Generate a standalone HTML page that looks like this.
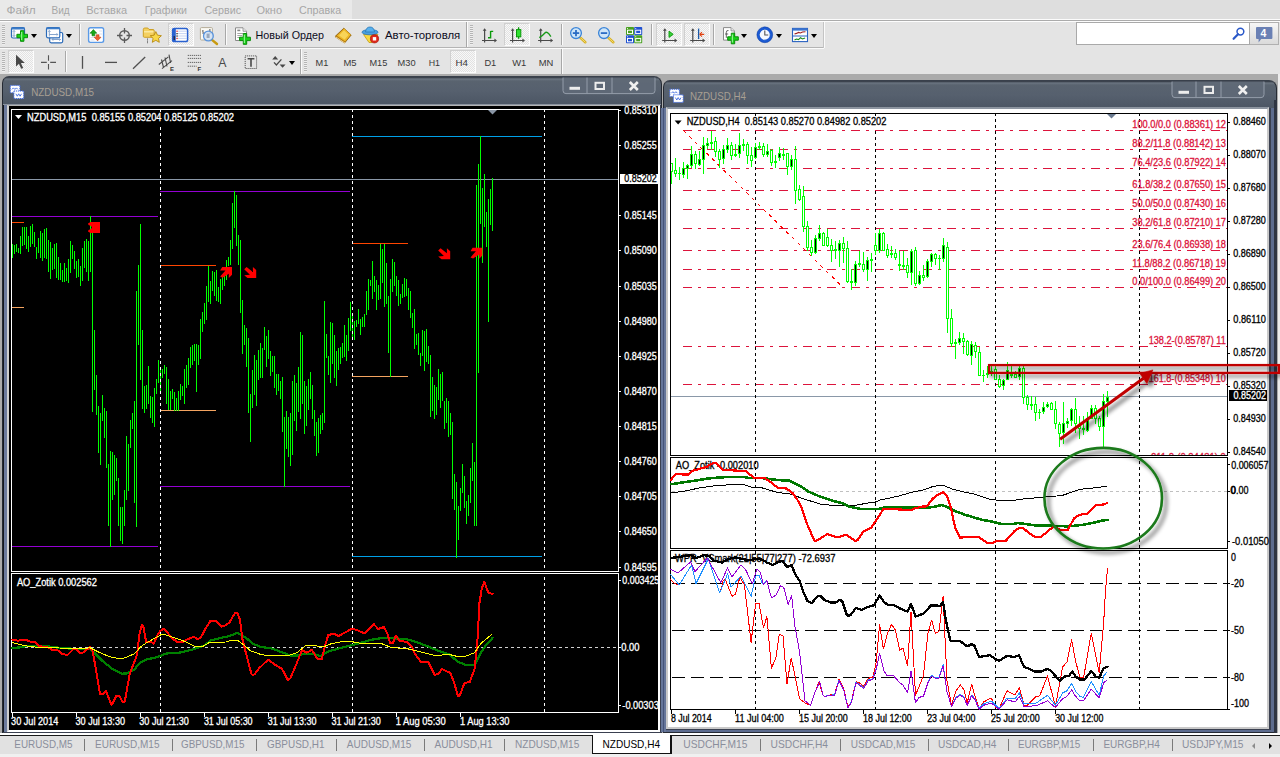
<!DOCTYPE html>
<html><head><meta charset="utf-8"><title>MT4</title>
<style>
*{box-sizing:border-box;margin:0;padding:0}
html,body{width:1280px;height:757px;overflow:hidden;background:#ababab;font-family:"Liberation Sans",sans-serif;font-size:12px;color:#000}
.abs{position:absolute}
#menubar{position:absolute;left:0;top:0;width:1280px;height:20px;background:#e3e3e3}
#menubar .l{position:absolute;left:0;top:0;width:352px;height:20px;background:#f0f0f0}
#menubar span{position:absolute;top:3px;font-size:12.5px;color:#a4a4a4;letter-spacing:-0.1px}
#tb{position:absolute;left:0;top:20px;width:1280px;height:54px;background:#e3e3e3}
.hl{position:absolute;left:0;width:1280px;height:1px}
.sep{position:absolute;width:1px;background:#a8a8a8}
.sep:after{content:"";position:absolute;left:1px;top:0;width:1px;height:100%;background:#fbfbfb}
.grip{position:absolute;width:3px;height:19px;background:repeating-linear-gradient(to bottom,#b4b4b4 0,#b4b4b4 1px,#efefef 1px,#efefef 2px)}
.pressed{position:absolute;border:1px solid #fdfdfd;border-top-color:#d0d0d0;border-left-color:#d0d0d0;background:#efefef;background-image:repeating-conic-gradient(#f8f8f8 0 25%,#e2e2e2 0 50%);background-size:2px 2px}
.tbt{position:absolute;font-size:12px;color:#111;white-space:nowrap}
.tf{position:absolute;top:56px;font-size:10.5px;color:#3a3a3a;white-space:nowrap;letter-spacing:-0.2px}
.dd{position:absolute;width:0;height:0;border-left:3.5px solid transparent;border-right:3.5px solid transparent;border-top:4px solid #000}
.win{position:absolute;background:#545e6c}
.wtitle{position:absolute;font-size:11.5px;color:#a9a092;white-space:nowrap;letter-spacing:-0.1px}
#tabs{position:absolute;left:0;top:736px;width:1280px;height:21px;background:#e1e1e1}
#tabs span{position:absolute;top:2px;font-size:11.5px;color:#8b8f9c;white-space:nowrap;letter-spacing:-0.15px}
#tabs i{position:absolute;top:4px;width:1px;height:12px;background:#7a7a7a}
svg text{font-family:"Liberation Sans",sans-serif}
</style></head><body>
<div id="menubar" style="height:19px;background:#dedede"><div class="l" style="height:19px;background:#e9e9e9"></div></div>
<div id="tb" style="top:19px;height:55px;background:#e4e4e4">
<div class="hl" style="top:0;background:#fcfcfc"></div><div class="hl" style="top:1px;background:#ababab"></div><div class="hl" style="top:2px;background:#fdfdfd"></div>
<div class="hl" style="top:28px;background:#b4b4b4;width:824px"></div><div class="hl" style="top:29px;background:#fbfbfb;width:824px"></div>
<div class="sep" style="left:823px;top:3px;height:26px;background:#c4c4c4"></div>
<div class="sep" style="left:561px;top:30px;height:25px"></div>
</div>
<!-- toolbar 1 items -->
<div class="grip" style="left:2px;top:25px;height:20px"></div>
<div class="sep" style="left:79px;top:24px;height:21px"></div>
<div class="pressed" style="left:168px;top:23px;width:26px;height:23px"></div>
<div class="sep" style="left:225px;top:24px;height:21px"></div>
<div class="sep" style="left:466px;top:22px;height:25px"></div>
<div class="grip" style="left:470px;top:25px;height:20px"></div>
<div class="pressed" style="left:504px;top:23px;width:26px;height:23px"></div>
<div class="sep" style="left:561px;top:24px;height:21px"></div>
<div class="sep" style="left:651px;top:24px;height:21px"></div>
<div class="pressed" style="left:656px;top:23px;width:26px;height:23px"></div>
<div class="pressed" style="left:684px;top:23px;width:26px;height:23px"></div>
<div class="sep" style="left:713px;top:24px;height:21px"></div>
<div class="dd" style="left:30.5px;top:34px"></div><div class="dd" style="left:65.5px;top:34px"></div>
<div class="dd" style="left:740.5px;top:34px"></div><div class="dd" style="left:775.5px;top:34px"></div><div class="dd" style="left:810.5px;top:34px"></div>
<!-- search -->
<div class="abs" style="left:1076px;top:22px;width:174px;height:23px;background:#fff;border:1px solid #a9a9a9"></div>
<div class="abs" style="left:1250px;top:22px;width:29px;height:23px;background:linear-gradient(#f6f6f6,#dadada);border:1px solid #b0b0b0;border-left:none"></div>
<!-- toolbar 2 items -->
<div class="grip" style="left:2px;top:52px;height:20px"></div>
<div class="pressed" style="left:8px;top:50px;width:26px;height:23px"></div>
<div class="sep" style="left:65px;top:51px;height:21px"></div>
<div class="sep" style="left:300px;top:49px;height:25px"></div>
<div class="grip" style="left:304px;top:52px;height:20px"></div>
<div class="pressed" style="left:450px;top:50px;width:26px;height:23px"></div>
<div class="dd" style="left:288.5px;top:61px"></div>
<!-- MDI edges -->
<div class="abs" style="left:1278px;top:74px;width:2px;height:659px;background:#ececec"></div>
<div class="abs" style="left:0;top:733px;width:1280px;height:2px;background:#fff"></div>
<!-- LEFT WINDOW -->
<div class="win" style="left:2px;top:76px;width:660px;height:657px;border-radius:7px 8px 0 0;background:linear-gradient(#2c323c 0,#6a7480 2px,#59636f 4px,#56606e 14px,#4d5765 26px,#4d5765 27px,#8a929e 27px,#8a929e 28px,#4a5462 28px);border:1px solid #252a33;border-top-color:#39404b"></div>
<div class="abs" style="left:3px;top:105px;width:1px;height:627px;background:#15181e"></div>
<div class="abs" style="left:4px;top:105px;width:3px;height:627px;background:#6c7a9c"></div>
<div class="abs" style="left:7px;top:105px;width:653px;height:627px;background:#000;border-left:2px solid #cfcfcf;border-top:1px solid #b4b4b4;border-right:2px solid #fff;border-bottom:2px solid #fff"></div>
<div class="abs" style="left:660px;top:105px;width:1px;height:628px;background:#3a4050"></div>
<div class="abs" style="left:3px;top:732px;width:659px;height:1px;background:#3a4050"></div>
<!-- RIGHT WINDOW -->
<div class="win" style="left:663px;top:80px;width:614px;height:653px;border-radius:7px 8px 0 0;background:linear-gradient(#2c323c 0,#6a7480 2px,#59636f 4px,#56606e 14px,#4d5765 26px,#4a5462 100%);border:1px solid #252a33;border-top-color:#39404b"></div>
<div class="abs" style="left:661px;top:108px;width:5px;height:624px;background:linear-gradient(to right,#66769a 0,#66769a 2px,#46547a 2px,#46547a 3px,#66769a 3px)"></div>
<div class="abs" style="left:1271px;top:108px;width:3px;height:624px;background:#5d6c8e"></div>
<div class="abs" style="left:666px;top:730px;width:608px;height:2px;background:#5d6c8e"></div>
<div class="abs" style="left:666px;top:107px;width:603px;height:622px;background:#fff;border:2px solid #c9c9c9;border-top:2px solid #8d95a0"></div>
<div class="abs" style="left:1269px;top:108px;width:2px;height:622px;background:#3a4050"></div>
<div class="abs" style="left:1274px;top:100px;width:3px;height:633px;background:#2f3542"></div>
<div class="abs" style="left:666px;top:729px;width:605px;height:1px;background:#3a4050"></div>
<!-- bottom tabs -->
<div id="tabs" style="top:735px;height:22px">
<div class="hl" style="top:0;background:#1a1a1a"></div>
<div class="hl" style="top:19px;background:#f0f0f0;height:3px"></div>
<div class="abs" style="left:592px;top:0;width:80px;height:19px;background:#fff;border-left:1px solid #111;border-right:2px solid #111;border-bottom:1px solid #111"></div>
<i style="left:84px"></i><i style="left:172px"></i><i style="left:256px"></i><i style="left:336px"></i><i style="left:424px"></i><i style="left:504px"></i>
<i style="left:760px"></i><i style="left:840px"></i><i style="left:928px"></i><i style="left:1008px"></i><i style="left:1093px"></i><i style="left:1172px"></i>
<div class="abs" style="left:1252px;top:7.5px;width:0;height:0;border-top:3.5px solid transparent;border-bottom:3.5px solid transparent;border-right:3.5px solid #8c8c8c"></div>
<div class="abs" style="left:1269px;top:7.5px;width:0;height:0;border-top:3.5px solid transparent;border-bottom:3.5px solid transparent;border-left:3.5px solid #000"></div>
</div>
<svg class="abs" style="left:0;top:0" width="1280" height="757" viewBox="0 0 1280 757">
<defs><filter id="sh" x="-20%" y="-20%" width="150%" height="160%"><feGaussianBlur in="SourceAlpha" stdDeviation="2.2"/><feOffset dx="3.5" dy="4"/><feComponentTransfer><feFuncA type="linear" slope="0.6"/></feComponentTransfer><feMerge><feMergeNode/><feMergeNode in="SourceGraphic"/></feMerge></filter><filter id="sh2" x="-5%" y="-100%" width="110%" height="400%"><feGaussianBlur in="SourceAlpha" stdDeviation="2"/><feOffset dx="2" dy="2.6"/><feComponentTransfer><feFuncA type="linear" slope="0.62"/></feComponentTransfer><feMerge><feMergeNode/><feMergeNode in="SourceGraphic"/></feMerge></filter></defs>
<g shape-rendering="crispEdges">
<rect x="11" y="109" width="608" height="1" fill="#ffffff" />
<rect x="11" y="571" width="608" height="1" fill="#ffffff" />
<rect x="11" y="109" width="1" height="463" fill="#ffffff"/>
<rect x="618" y="109" width="1" height="463" fill="#ffffff"/>
<rect x="11" y="573" width="608" height="1" fill="#ffffff" />
<rect x="11" y="712" width="608" height="1" fill="#ffffff" />
<rect x="11" y="573" width="1" height="140" fill="#ffffff"/>
<rect x="618" y="573" width="1" height="140" fill="#ffffff"/>
<rect x="12" y="179" width="606" height="1" fill="#8a98a8" />
<rect x="12" y="216" width="146" height="1" fill="#9400d3" />
<rect x="12" y="546" width="146" height="1" fill="#9400d3" />
<rect x="160" y="191" width="190" height="1" fill="#9400d3" />
<rect x="160" y="486" width="190" height="1" fill="#9400d3" />
<rect x="352" y="136" width="190" height="1" fill="#00a0e8" />
<rect x="352" y="556" width="190" height="1" fill="#00a0e8" />
<rect x="12" y="222" width="12" height="1" fill="#ff4500" />
<rect x="12" y="307" width="12" height="1" fill="#f4a460" />
<rect x="160" y="265" width="56" height="1" fill="#ff4500" />
<rect x="160" y="410" width="56" height="1" fill="#f4a460" />
<rect x="352" y="243" width="56" height="1" fill="#ff4500" />
<rect x="352" y="376" width="56" height="1" fill="#f4a460" />
<rect x="12" y="244" width="1" height="14" fill="#00ff00"/>
<rect x="14" y="245" width="1" height="9" fill="#00ff00"/>
<rect x="16" y="244" width="1" height="8" fill="#00ff00"/>
<rect x="18" y="248" width="1" height="5" fill="#00ff00"/>
<rect x="20" y="236" width="1" height="18" fill="#00ff00"/>
<rect x="22" y="227" width="1" height="19" fill="#00ff00"/>
<rect x="24" y="227" width="1" height="18" fill="#00ff00"/>
<rect x="26" y="227" width="1" height="22" fill="#00ff00"/>
<rect x="28" y="236" width="1" height="16" fill="#00ff00"/>
<rect x="30" y="226" width="1" height="21" fill="#00ff00"/>
<rect x="32" y="224" width="1" height="20" fill="#00ff00"/>
<rect x="34" y="232" width="1" height="15" fill="#00ff00"/>
<rect x="36" y="247" width="1" height="12" fill="#00ff00"/>
<rect x="38" y="238" width="1" height="15" fill="#00ff00"/>
<rect x="40" y="231" width="1" height="27" fill="#00ff00"/>
<rect x="42" y="233" width="1" height="28" fill="#00ff00"/>
<rect x="44" y="229" width="1" height="29" fill="#00ff00"/>
<rect x="46" y="228" width="1" height="31" fill="#00ff00"/>
<rect x="48" y="240" width="1" height="32" fill="#00ff00"/>
<rect x="50" y="242" width="1" height="37" fill="#00ff00"/>
<rect x="52" y="248" width="1" height="22" fill="#00ff00"/>
<rect x="54" y="244" width="1" height="25" fill="#00ff00"/>
<rect x="56" y="243" width="1" height="35" fill="#00ff00"/>
<rect x="58" y="257" width="1" height="23" fill="#00ff00"/>
<rect x="60" y="263" width="1" height="17" fill="#00ff00"/>
<rect x="62" y="270" width="1" height="12" fill="#00ff00"/>
<rect x="64" y="263" width="1" height="19" fill="#00ff00"/>
<rect x="66" y="268" width="1" height="13" fill="#00ff00"/>
<rect x="68" y="259" width="1" height="24" fill="#00ff00"/>
<rect x="70" y="241" width="1" height="32" fill="#00ff00"/>
<rect x="72" y="245" width="1" height="14" fill="#00ff00"/>
<rect x="74" y="251" width="1" height="18" fill="#00ff00"/>
<rect x="76" y="261" width="1" height="17" fill="#00ff00"/>
<rect x="78" y="259" width="1" height="18" fill="#00ff00"/>
<rect x="80" y="266" width="1" height="20" fill="#00ff00"/>
<rect x="82" y="248" width="1" height="33" fill="#00ff00"/>
<rect x="84" y="241" width="1" height="27" fill="#00ff00"/>
<rect x="86" y="239" width="1" height="33" fill="#00ff00"/>
<rect x="88" y="241" width="1" height="40" fill="#00ff00"/>
<rect x="90" y="216" width="1" height="56" fill="#00ff00"/>
<rect x="92" y="233" width="1" height="179" fill="#00ff00"/>
<rect x="94" y="330" width="1" height="60" fill="#00ff00"/>
<rect x="96" y="375" width="1" height="40" fill="#00ff00"/>
<rect x="98" y="406" width="1" height="47" fill="#00ff00"/>
<rect x="100" y="413" width="1" height="52" fill="#00ff00"/>
<rect x="102" y="395" width="1" height="26" fill="#00ff00"/>
<rect x="104" y="408" width="1" height="30" fill="#00ff00"/>
<rect x="106" y="411" width="1" height="57" fill="#00ff00"/>
<rect x="108" y="464" width="1" height="62" fill="#00ff00"/>
<rect x="110" y="451" width="1" height="96" fill="#00ff00"/>
<rect x="112" y="452" width="1" height="48" fill="#00ff00"/>
<rect x="114" y="455" width="1" height="40" fill="#00ff00"/>
<rect x="116" y="458" width="1" height="23" fill="#00ff00"/>
<rect x="118" y="478" width="1" height="48" fill="#00ff00"/>
<rect x="120" y="507" width="1" height="34" fill="#00ff00"/>
<rect x="122" y="507" width="1" height="37" fill="#00ff00"/>
<rect x="124" y="490" width="1" height="36" fill="#00ff00"/>
<rect x="126" y="436" width="1" height="64" fill="#00ff00"/>
<rect x="128" y="444" width="1" height="47" fill="#00ff00"/>
<rect x="130" y="420" width="1" height="28" fill="#00ff00"/>
<rect x="132" y="413" width="1" height="16" fill="#00ff00"/>
<rect x="134" y="401" width="1" height="102" fill="#00ff00"/>
<rect x="136" y="291" width="1" height="236" fill="#00ff00"/>
<rect x="138" y="265" width="1" height="80" fill="#00ff00"/>
<rect x="140" y="224" width="1" height="156" fill="#00ff00"/>
<rect x="142" y="330" width="1" height="79" fill="#00ff00"/>
<rect x="144" y="386" width="1" height="27" fill="#00ff00"/>
<rect x="146" y="385" width="1" height="24" fill="#00ff00"/>
<rect x="148" y="366" width="1" height="38" fill="#00ff00"/>
<rect x="150" y="396" width="1" height="22" fill="#00ff00"/>
<rect x="152" y="397" width="1" height="26" fill="#00ff00"/>
<rect x="154" y="388" width="1" height="39" fill="#00ff00"/>
<rect x="156" y="379" width="1" height="15" fill="#00ff00"/>
<rect x="158" y="360" width="1" height="23" fill="#00ff00"/>
<rect x="160" y="367" width="1" height="27" fill="#00ff00"/>
<rect x="162" y="369" width="1" height="9" fill="#00ff00"/>
<rect x="164" y="365" width="1" height="9" fill="#00ff00"/>
<rect x="166" y="367" width="1" height="37" fill="#00ff00"/>
<rect x="168" y="379" width="1" height="31" fill="#00ff00"/>
<rect x="170" y="391" width="1" height="19" fill="#00ff00"/>
<rect x="172" y="389" width="1" height="10" fill="#00ff00"/>
<rect x="174" y="392" width="1" height="19" fill="#00ff00"/>
<rect x="176" y="398" width="1" height="13" fill="#00ff00"/>
<rect x="178" y="391" width="1" height="20" fill="#00ff00"/>
<rect x="180" y="384" width="1" height="16" fill="#00ff00"/>
<rect x="182" y="386" width="1" height="10" fill="#00ff00"/>
<rect x="184" y="369" width="1" height="35" fill="#00ff00"/>
<rect x="186" y="365" width="1" height="23" fill="#00ff00"/>
<rect x="188" y="358" width="1" height="27" fill="#00ff00"/>
<rect x="190" y="347" width="1" height="21" fill="#00ff00"/>
<rect x="192" y="345" width="1" height="20" fill="#00ff00"/>
<rect x="194" y="344" width="1" height="17" fill="#00ff00"/>
<rect x="196" y="344" width="1" height="48" fill="#00ff00"/>
<rect x="198" y="345" width="1" height="20" fill="#00ff00"/>
<rect x="200" y="319" width="1" height="40" fill="#00ff00"/>
<rect x="202" y="312" width="1" height="20" fill="#00ff00"/>
<rect x="204" y="303" width="1" height="21" fill="#00ff00"/>
<rect x="206" y="286" width="1" height="34" fill="#00ff00"/>
<rect x="208" y="266" width="1" height="36" fill="#00ff00"/>
<rect x="210" y="281" width="1" height="23" fill="#00ff00"/>
<rect x="212" y="271" width="1" height="20" fill="#00ff00"/>
<rect x="214" y="272" width="1" height="24" fill="#00ff00"/>
<rect x="216" y="270" width="1" height="31" fill="#00ff00"/>
<rect x="218" y="287" width="1" height="15" fill="#00ff00"/>
<rect x="220" y="279" width="1" height="25" fill="#00ff00"/>
<rect x="222" y="277" width="1" height="13" fill="#00ff00"/>
<rect x="224" y="273" width="1" height="13" fill="#00ff00"/>
<rect x="226" y="260" width="1" height="20" fill="#00ff00"/>
<rect x="228" y="257" width="1" height="9" fill="#00ff00"/>
<rect x="230" y="240" width="1" height="25" fill="#00ff00"/>
<rect x="232" y="203" width="1" height="46" fill="#00ff00"/>
<rect x="234" y="191" width="1" height="37" fill="#00ff00"/>
<rect x="236" y="195" width="1" height="51" fill="#00ff00"/>
<rect x="238" y="235" width="1" height="30" fill="#00ff00"/>
<rect x="240" y="240" width="1" height="73" fill="#00ff00"/>
<rect x="242" y="300" width="1" height="54" fill="#00ff00"/>
<rect x="244" y="325" width="1" height="20" fill="#00ff00"/>
<rect x="246" y="328" width="1" height="39" fill="#00ff00"/>
<rect x="248" y="338" width="1" height="75" fill="#00ff00"/>
<rect x="250" y="394" width="1" height="48" fill="#00ff00"/>
<rect x="252" y="370" width="1" height="38" fill="#00ff00"/>
<rect x="254" y="355" width="1" height="40" fill="#00ff00"/>
<rect x="256" y="360" width="1" height="46" fill="#00ff00"/>
<rect x="258" y="350" width="1" height="30" fill="#00ff00"/>
<rect x="260" y="343" width="1" height="35" fill="#00ff00"/>
<rect x="262" y="348" width="1" height="30" fill="#00ff00"/>
<rect x="264" y="327" width="1" height="23" fill="#00ff00"/>
<rect x="266" y="336" width="1" height="31" fill="#00ff00"/>
<rect x="268" y="330" width="1" height="29" fill="#00ff00"/>
<rect x="270" y="351" width="1" height="25" fill="#00ff00"/>
<rect x="272" y="356" width="1" height="16" fill="#00ff00"/>
<rect x="274" y="356" width="1" height="32" fill="#00ff00"/>
<rect x="276" y="374" width="1" height="21" fill="#00ff00"/>
<rect x="278" y="374" width="1" height="17" fill="#00ff00"/>
<rect x="280" y="381" width="1" height="18" fill="#00ff00"/>
<rect x="282" y="377" width="1" height="55" fill="#00ff00"/>
<rect x="284" y="417" width="1" height="70" fill="#00ff00"/>
<rect x="286" y="411" width="1" height="38" fill="#00ff00"/>
<rect x="288" y="417" width="1" height="40" fill="#00ff00"/>
<rect x="290" y="413" width="1" height="53" fill="#00ff00"/>
<rect x="292" y="381" width="1" height="74" fill="#00ff00"/>
<rect x="294" y="375" width="1" height="46" fill="#00ff00"/>
<rect x="296" y="383" width="1" height="48" fill="#00ff00"/>
<rect x="298" y="367" width="1" height="45" fill="#00ff00"/>
<rect x="300" y="332" width="1" height="87" fill="#00ff00"/>
<rect x="302" y="335" width="1" height="69" fill="#00ff00"/>
<rect x="304" y="381" width="1" height="53" fill="#00ff00"/>
<rect x="306" y="386" width="1" height="40" fill="#00ff00"/>
<rect x="308" y="379" width="1" height="31" fill="#00ff00"/>
<rect x="310" y="372" width="1" height="27" fill="#00ff00"/>
<rect x="312" y="385" width="1" height="34" fill="#00ff00"/>
<rect x="314" y="410" width="1" height="26" fill="#00ff00"/>
<rect x="316" y="422" width="1" height="34" fill="#00ff00"/>
<rect x="318" y="418" width="1" height="35" fill="#00ff00"/>
<rect x="320" y="415" width="1" height="19" fill="#00ff00"/>
<rect x="322" y="413" width="1" height="17" fill="#00ff00"/>
<rect x="324" y="301" width="1" height="122" fill="#00ff00"/>
<rect x="326" y="334" width="1" height="24" fill="#00ff00"/>
<rect x="328" y="356" width="1" height="19" fill="#00ff00"/>
<rect x="330" y="322" width="1" height="61" fill="#00ff00"/>
<rect x="332" y="323" width="1" height="41" fill="#00ff00"/>
<rect x="334" y="335" width="1" height="43" fill="#00ff00"/>
<rect x="336" y="351" width="1" height="35" fill="#00ff00"/>
<rect x="338" y="348" width="1" height="22" fill="#00ff00"/>
<rect x="340" y="347" width="1" height="17" fill="#00ff00"/>
<rect x="342" y="343" width="1" height="15" fill="#00ff00"/>
<rect x="344" y="325" width="1" height="32" fill="#00ff00"/>
<rect x="346" y="335" width="1" height="26" fill="#00ff00"/>
<rect x="348" y="318" width="1" height="33" fill="#00ff00"/>
<rect x="350" y="302" width="1" height="29" fill="#00ff00"/>
<rect x="352" y="316" width="1" height="21" fill="#00ff00"/>
<rect x="354" y="321" width="1" height="19" fill="#00ff00"/>
<rect x="356" y="320" width="1" height="7" fill="#00ff00"/>
<rect x="358" y="309" width="1" height="15" fill="#00ff00"/>
<rect x="360" y="319" width="1" height="16" fill="#00ff00"/>
<rect x="362" y="317" width="1" height="10" fill="#00ff00"/>
<rect x="364" y="314" width="1" height="13" fill="#00ff00"/>
<rect x="366" y="291" width="1" height="24" fill="#00ff00"/>
<rect x="368" y="279" width="1" height="31" fill="#00ff00"/>
<rect x="370" y="280" width="1" height="6" fill="#00ff00"/>
<rect x="372" y="261" width="1" height="38" fill="#00ff00"/>
<rect x="374" y="276" width="1" height="16" fill="#00ff00"/>
<rect x="376" y="280" width="1" height="30" fill="#00ff00"/>
<rect x="378" y="285" width="1" height="15" fill="#00ff00"/>
<rect x="380" y="244" width="1" height="55" fill="#00ff00"/>
<rect x="382" y="249" width="1" height="34" fill="#00ff00"/>
<rect x="384" y="244" width="1" height="63" fill="#00ff00"/>
<rect x="386" y="263" width="1" height="41" fill="#00ff00"/>
<rect x="388" y="296" width="1" height="57" fill="#00ff00"/>
<rect x="390" y="279" width="1" height="98" fill="#00ff00"/>
<rect x="392" y="259" width="1" height="33" fill="#00ff00"/>
<rect x="394" y="262" width="1" height="24" fill="#00ff00"/>
<rect x="396" y="276" width="1" height="20" fill="#00ff00"/>
<rect x="398" y="280" width="1" height="26" fill="#00ff00"/>
<rect x="400" y="294" width="1" height="10" fill="#00ff00"/>
<rect x="402" y="284" width="1" height="14" fill="#00ff00"/>
<rect x="404" y="278" width="1" height="19" fill="#00ff00"/>
<rect x="406" y="279" width="1" height="17" fill="#00ff00"/>
<rect x="408" y="288" width="1" height="22" fill="#00ff00"/>
<rect x="410" y="291" width="1" height="27" fill="#00ff00"/>
<rect x="412" y="313" width="1" height="15" fill="#00ff00"/>
<rect x="414" y="309" width="1" height="40" fill="#00ff00"/>
<rect x="416" y="334" width="1" height="11" fill="#00ff00"/>
<rect x="418" y="333" width="1" height="22" fill="#00ff00"/>
<rect x="420" y="353" width="1" height="13" fill="#00ff00"/>
<rect x="422" y="330" width="1" height="26" fill="#00ff00"/>
<rect x="424" y="331" width="1" height="40" fill="#00ff00"/>
<rect x="426" y="329" width="1" height="33" fill="#00ff00"/>
<rect x="428" y="346" width="1" height="18" fill="#00ff00"/>
<rect x="430" y="355" width="1" height="62" fill="#00ff00"/>
<rect x="432" y="377" width="1" height="34" fill="#00ff00"/>
<rect x="434" y="385" width="1" height="34" fill="#00ff00"/>
<rect x="436" y="387" width="1" height="28" fill="#00ff00"/>
<rect x="438" y="369" width="1" height="31" fill="#00ff00"/>
<rect x="440" y="374" width="1" height="34" fill="#00ff00"/>
<rect x="442" y="372" width="1" height="29" fill="#00ff00"/>
<rect x="444" y="401" width="1" height="28" fill="#00ff00"/>
<rect x="446" y="398" width="1" height="25" fill="#00ff00"/>
<rect x="448" y="401" width="1" height="36" fill="#00ff00"/>
<rect x="450" y="413" width="1" height="22" fill="#00ff00"/>
<rect x="452" y="422" width="1" height="77" fill="#00ff00"/>
<rect x="454" y="474" width="1" height="36" fill="#00ff00"/>
<rect x="456" y="482" width="1" height="76" fill="#00ff00"/>
<rect x="458" y="506" width="1" height="34" fill="#00ff00"/>
<rect x="460" y="488" width="1" height="23" fill="#00ff00"/>
<rect x="462" y="464" width="1" height="29" fill="#00ff00"/>
<rect x="464" y="476" width="1" height="32" fill="#00ff00"/>
<rect x="466" y="501" width="1" height="23" fill="#00ff00"/>
<rect x="468" y="495" width="1" height="21" fill="#00ff00"/>
<rect x="470" y="468" width="1" height="35" fill="#00ff00"/>
<rect x="472" y="443" width="1" height="38" fill="#00ff00"/>
<rect x="474" y="462" width="1" height="64" fill="#00ff00"/>
<rect x="476" y="185" width="1" height="341" fill="#00ff00"/>
<rect x="478" y="164" width="1" height="209" fill="#00ff00"/>
<rect x="480" y="136" width="1" height="88" fill="#00ff00"/>
<rect x="482" y="188" width="1" height="75" fill="#00ff00"/>
<rect x="484" y="174" width="1" height="53" fill="#00ff00"/>
<rect x="486" y="212" width="1" height="35" fill="#00ff00"/>
<rect x="488" y="199" width="1" height="123" fill="#00ff00"/>
<rect x="490" y="189" width="1" height="36" fill="#00ff00"/>
<rect x="492" y="178" width="1" height="53" fill="#00ff00"/>
<line x1="160.5" y1="110" x2="160.5" y2="571" stroke="#ffffff" stroke-width="1" stroke-dasharray="3 3" stroke-dashoffset="1" shape-rendering="crispEdges"/>
<line x1="160.5" y1="574" x2="160.5" y2="712" stroke="#ffffff" stroke-width="1" stroke-dasharray="3 3" stroke-dashoffset="3" shape-rendering="crispEdges"/>
<line x1="352.5" y1="110" x2="352.5" y2="571" stroke="#ffffff" stroke-width="1" stroke-dasharray="3 3" stroke-dashoffset="1" shape-rendering="crispEdges"/>
<line x1="352.5" y1="574" x2="352.5" y2="712" stroke="#ffffff" stroke-width="1" stroke-dasharray="3 3" stroke-dashoffset="3" shape-rendering="crispEdges"/>
<line x1="544.5" y1="110" x2="544.5" y2="571" stroke="#ffffff" stroke-width="1" stroke-dasharray="3 3" stroke-dashoffset="1" shape-rendering="crispEdges"/>
<line x1="544.5" y1="574" x2="544.5" y2="712" stroke="#ffffff" stroke-width="1" stroke-dasharray="3 3" stroke-dashoffset="3" shape-rendering="crispEdges"/>
<line x1="13" y1="647.5" x2="618" y2="647.5" stroke="#d0d0d0" stroke-width="1" stroke-dasharray="3 3" stroke-dashoffset="0" shape-rendering="crispEdges"/>
<rect x="619" y="110" width="2" height="1" fill="#ffffff" />
<rect x="619" y="145" width="2" height="1" fill="#ffffff" />
<rect x="619" y="215" width="2" height="1" fill="#ffffff" />
<rect x="619" y="250" width="2" height="1" fill="#ffffff" />
<rect x="619" y="286" width="2" height="1" fill="#ffffff" />
<rect x="619" y="321" width="2" height="1" fill="#ffffff" />
<rect x="619" y="356" width="2" height="1" fill="#ffffff" />
<rect x="619" y="391" width="2" height="1" fill="#ffffff" />
<rect x="619" y="426" width="2" height="1" fill="#ffffff" />
<rect x="619" y="461" width="2" height="1" fill="#ffffff" />
<rect x="619" y="496" width="2" height="1" fill="#ffffff" />
<rect x="619" y="531" width="2" height="1" fill="#ffffff" />
<rect x="619" y="567" width="2" height="1" fill="#ffffff" />
<rect x="619" y="580" width="2" height="1" fill="#ffffff" />
<rect x="619" y="647" width="2" height="1" fill="#ffffff" />
<rect x="619" y="705" width="2" height="1" fill="#ffffff" />
<rect x="12" y="713" width="1" height="4" fill="#ffffff"/>
<rect x="76" y="713" width="1" height="4" fill="#ffffff"/>
<rect x="140" y="713" width="1" height="4" fill="#ffffff"/>
<rect x="204" y="713" width="1" height="4" fill="#ffffff"/>
<rect x="268" y="713" width="1" height="4" fill="#ffffff"/>
<rect x="332" y="713" width="1" height="4" fill="#ffffff"/>
<rect x="396" y="713" width="1" height="4" fill="#ffffff"/>
<rect x="460" y="713" width="1" height="4" fill="#ffffff"/>
</g>
<text x="624.3" y="113.8" fill="#ffffff" stroke="#ffffff" stroke-width="0.3" font-size="10" text-anchor="start" xml:space="preserve"  textLength="32.5" lengthAdjust="spacingAndGlyphs">0.85310</text>
<text x="624.3" y="148.8" fill="#ffffff" stroke="#ffffff" stroke-width="0.3" font-size="10" text-anchor="start" xml:space="preserve"  textLength="32.5" lengthAdjust="spacingAndGlyphs">0.85255</text>
<text x="624.3" y="218.8" fill="#ffffff" stroke="#ffffff" stroke-width="0.3" font-size="10" text-anchor="start" xml:space="preserve"  textLength="32.5" lengthAdjust="spacingAndGlyphs">0.85145</text>
<text x="624.3" y="253.8" fill="#ffffff" stroke="#ffffff" stroke-width="0.3" font-size="10" text-anchor="start" xml:space="preserve"  textLength="32.5" lengthAdjust="spacingAndGlyphs">0.85090</text>
<text x="624.3" y="289.8" fill="#ffffff" stroke="#ffffff" stroke-width="0.3" font-size="10" text-anchor="start" xml:space="preserve"  textLength="32.5" lengthAdjust="spacingAndGlyphs">0.85035</text>
<text x="624.3" y="324.8" fill="#ffffff" stroke="#ffffff" stroke-width="0.3" font-size="10" text-anchor="start" xml:space="preserve"  textLength="32.5" lengthAdjust="spacingAndGlyphs">0.84980</text>
<text x="624.3" y="359.8" fill="#ffffff" stroke="#ffffff" stroke-width="0.3" font-size="10" text-anchor="start" xml:space="preserve"  textLength="32.5" lengthAdjust="spacingAndGlyphs">0.84925</text>
<text x="624.3" y="394.8" fill="#ffffff" stroke="#ffffff" stroke-width="0.3" font-size="10" text-anchor="start" xml:space="preserve"  textLength="32.5" lengthAdjust="spacingAndGlyphs">0.84870</text>
<text x="624.3" y="429.8" fill="#ffffff" stroke="#ffffff" stroke-width="0.3" font-size="10" text-anchor="start" xml:space="preserve"  textLength="32.5" lengthAdjust="spacingAndGlyphs">0.84815</text>
<text x="624.3" y="464.8" fill="#ffffff" stroke="#ffffff" stroke-width="0.3" font-size="10" text-anchor="start" xml:space="preserve"  textLength="32.5" lengthAdjust="spacingAndGlyphs">0.84760</text>
<text x="624.3" y="499.8" fill="#ffffff" stroke="#ffffff" stroke-width="0.3" font-size="10" text-anchor="start" xml:space="preserve"  textLength="32.5" lengthAdjust="spacingAndGlyphs">0.84705</text>
<text x="624.3" y="534.8" fill="#ffffff" stroke="#ffffff" stroke-width="0.3" font-size="10" text-anchor="start" xml:space="preserve"  textLength="32.5" lengthAdjust="spacingAndGlyphs">0.84650</text>
<text x="624.3" y="570.8" fill="#ffffff" stroke="#ffffff" stroke-width="0.3" font-size="10" text-anchor="start" xml:space="preserve"  textLength="32.5" lengthAdjust="spacingAndGlyphs">0.84595</text>
<rect x="620" y="174" width="38" height="10" fill="#fff"/>
<text x="624.3" y="182" fill="#000" stroke="#000" stroke-width="0.3" font-size="10" text-anchor="start" xml:space="preserve"  textLength="32.5" lengthAdjust="spacingAndGlyphs">0.85202</text>
<text x="622.3" y="584" fill="#ffffff" stroke="#ffffff" stroke-width="0.3" font-size="10" text-anchor="start" xml:space="preserve"  textLength="37" lengthAdjust="spacingAndGlyphs">0.003425</text>
<text x="621.3" y="650.8" fill="#ffffff" stroke="#ffffff" stroke-width="0.3" font-size="10" text-anchor="start" xml:space="preserve"  textLength="18.2" lengthAdjust="spacingAndGlyphs">0.00</text>
<text x="622.3" y="708.8" fill="#ffffff" stroke="#ffffff" stroke-width="0.3" font-size="10" text-anchor="start" xml:space="preserve"  textLength="36.5" lengthAdjust="spacingAndGlyphs">-0.00303</text>
<text x="11.1" y="725.4" fill="#ffffff" stroke="#ffffff" stroke-width="0.3" font-size="10" text-anchor="start" xml:space="preserve"  textLength="47.2" lengthAdjust="spacingAndGlyphs">30 Jul 2014</text>
<text x="75.5" y="725.4" fill="#ffffff" stroke="#ffffff" stroke-width="0.3" font-size="10" text-anchor="start" xml:space="preserve"  textLength="49.5" lengthAdjust="spacingAndGlyphs">30 Jul 13:30</text>
<text x="139.3" y="725.4" fill="#ffffff" stroke="#ffffff" stroke-width="0.3" font-size="10" text-anchor="start" xml:space="preserve"  textLength="49.5" lengthAdjust="spacingAndGlyphs">30 Jul 21:30</text>
<text x="203.9" y="725.4" fill="#ffffff" stroke="#ffffff" stroke-width="0.3" font-size="10" text-anchor="start" xml:space="preserve"  textLength="48.7" lengthAdjust="spacingAndGlyphs">31 Jul 05:30</text>
<text x="267.7" y="725.4" fill="#ffffff" stroke="#ffffff" stroke-width="0.3" font-size="10" text-anchor="start" xml:space="preserve"  textLength="48.7" lengthAdjust="spacingAndGlyphs">31 Jul 13:30</text>
<text x="331.5" y="725.4" fill="#ffffff" stroke="#ffffff" stroke-width="0.3" font-size="10" text-anchor="start" xml:space="preserve"  textLength="49.2" lengthAdjust="spacingAndGlyphs">31 Jul 21:30</text>
<text x="395.7" y="725.4" fill="#ffffff" stroke="#ffffff" stroke-width="0.3" font-size="10" text-anchor="start" xml:space="preserve"  textLength="50.1" lengthAdjust="spacingAndGlyphs">1 Aug 05:30</text>
<text x="460" y="725.4" fill="#ffffff" stroke="#ffffff" stroke-width="0.3" font-size="10" text-anchor="start" xml:space="preserve"  textLength="49.5" lengthAdjust="spacingAndGlyphs">1 Aug 13:30</text>
<rect x="26" y="113" width="209" height="11" fill="#000"/>
<text x="27" y="121" fill="#ffffff" stroke="#ffffff" stroke-width="0.3" font-size="10" text-anchor="start" xml:space="preserve"  textLength="207" lengthAdjust="spacingAndGlyphs">NZDUSD,M15  0.85155 0.85204 0.85125 0.85202</text>
<path d="M15 115h7l-3.5 4z" fill="#fff"/>
<path d="M488 110h9l-4.5 4.5z" fill="#8a96a6"/>
<text x="16.9" y="586" fill="#ffffff" stroke="#ffffff" stroke-width="0.3" font-size="10" text-anchor="start" xml:space="preserve"  textLength="80" lengthAdjust="spacingAndGlyphs">AO_Zotik 0.002562</text>
<polyline points="12.3,647.8 19.9,647.5 26.5,646.0 34.8,646.0 49.6,646.5 59.5,647.8 76.0,649.0 90.0,648.6 95.9,654.4 102.5,661.0 112.4,669.0 121.5,673.7 127.2,673.4 133.8,670.0 140.4,662.6 147.0,659.3 155.3,657.7 160.0,656.0 166.6,653.5 181.5,652.4 193.0,649.4 204.6,645.3 211.2,640.3 219.4,638.2 229.3,636.2 236.7,632.9 240.9,634.6 246.6,638.2 252.4,643.6 260.7,646.9 272.2,648.6 282.1,652.4 290.4,655.5 298.6,655.5 305.2,653.5 313.5,653.9 320.1,656.0 329.2,651.2 342.2,647.5 357.0,643.8 371.8,639.7 382.9,637.9 394.0,638.3 406.9,639.2 416.2,642.0 427.3,646.2 438.4,650.8 449.5,654.5 457.8,661.9 466.1,665.0 474.5,665.0 480.9,652.7 486.5,644.4 492.6,637.9" fill="none" stroke="#008000" stroke-width="2.2" stroke-linejoin="round" stroke-linecap="round" shape-rendering="crispEdges"/>
<polyline points="12.3,639.5 18.3,640.7 24.9,639.5 29.8,641.5 34.8,642.0 38.9,646.0 49.6,647.8 51.3,649.8 57.9,650.3 62.8,654.4 67.8,654.7 73.6,649.0 76.0,649.4 80.2,653.0 83.5,652.4 90.0,647.0 92.6,651.0 95.9,669.0 100.0,694.4 102.5,694.4 105.8,690.7 111.6,705.0 116.5,695.7 119.0,695.7 123.0,702.3 124.8,701.5 129.7,674.0 137.0,655.0 139.6,633.0 142.0,624.7 143.7,628.0 146.2,642.5 150.4,641.5 153.7,643.7 157.8,634.6 160.0,631.3 163.6,628.8 167.4,632.6 171.6,637.9 177.3,642.0 182.3,642.0 187.2,639.5 193.8,636.7 197.1,638.7 200.4,638.4 205.4,628.8 210.3,621.0 216.1,621.0 221.4,626.6 225.2,625.5 229.3,622.7 235.1,612.8 237.6,613.4 240.0,619.7 242.5,639.5 245.8,652.7 251.6,674.5 254.4,674.5 259.0,668.4 268.1,659.6 275.5,665.0 282.1,669.0 287.9,680.0 290.4,678.3 297.0,662.6 301.9,650.2 306.9,652.7 311.8,649.7 317.6,659.3 321.7,659.3 325.0,646.0 328.3,635.0 333.9,633.8 338.5,636.0 345.9,632.0 352.4,628.6 357.9,630.5 364.4,633.3 373.6,624.0 378.3,629.0 383.8,627.0 387.5,634.0 390.3,643.4 393.0,643.0 395.8,635.7 399.5,640.7 406.9,642.0 411.6,646.2 415.3,654.5 420.8,661.6 428.2,661.6 434.7,674.9 438.4,674.0 442.0,669.0 450.4,673.0 454.1,682.3 457.8,695.6 459.7,695.6 464.3,683.2 469.8,681.9 474.5,669.3 477.2,645.3 479.5,602.7 481.9,588.0 484.3,582.0 488.3,592.6 492.6,593.9" fill="none" stroke="#ff0000" stroke-width="2" stroke-linejoin="round" stroke-linecap="round" shape-rendering="crispEdges"/>
<polyline points="12.3,642.5 19.9,644.5 29.8,646.5 43.0,647.8 59.5,648.0 76.0,649.0 90.0,647.8 99.2,652.4 109.0,656.5 120.6,659.0 127.2,656.9 134.7,653.6 140.4,647.0 147.0,642.5 155.3,637.9 161.9,634.3 165.0,634.6 174.9,637.9 184.8,641.5 194.7,646.4 202.9,646.4 209.5,642.5 226.0,642.0 231.0,640.3 237.6,640.3 244.2,645.3 250.8,651.0 260.7,654.4 267.3,655.5 288.7,655.5 297.0,652.7 305.2,646.0 308.5,645.3 316.8,646.0 323.4,646.9 331.1,643.8 342.2,641.6 351.4,641.6 360.7,643.4 381.0,643.4 391.2,647.5 406.9,648.6 423.6,652.7 434.7,655.5 449.5,654.5 458.7,656.8 466.1,656.0 474.5,652.7 480.9,643.4 486.5,638.8 492.0,634.2" fill="none" stroke="#ffff00" stroke-width="1" stroke-linejoin="round" stroke-linecap="round" shape-rendering="crispEdges"/>
<path transform="translate(226 272.5)" d="M-3.8 -5.5L6 -5.5L6 2.2L2.8 5.5L2.8 1.3L-3.3 5.2L-5.9 4.1L-0.5 -2L-5.9 -2Z" fill="#ff0000"/>
<path transform="translate(250.2 272.5)" d="M-3.6 -5.5L2.7 -0.6L2.7 -5.5L6 -2.5L6 5.5L-2.7 5.5L-6 2.7L-0.3 2.2L-6 -3.2Z" fill="#ff0000"/>
<path transform="translate(444.2 253.8)" d="M-3.6 -5.5L2.7 -0.6L2.7 -5.5L6 -2.5L6 5.5L-2.7 5.5L-6 2.7L-0.3 2.2L-6 -3.2Z" fill="#ff0000"/>
<path transform="translate(476.4 253.3)" d="M-3.8 -5.5L6 -5.5L6 2.2L2.8 5.5L2.8 1.3L-3.3 5.2L-5.9 4.1L-0.5 -2L-5.9 -2Z" fill="#ff0000"/>
<path d="M90.5 222H100V233H90.5L88 231.5L88.5 230L91 229L92 227.5L91 226L88.5 225L88 223.5Z" fill="#ff0000"/>
<g shape-rendering="crispEdges">
<rect x="670" y="113" width="558" height="1" fill="#000000" />
<rect x="670" y="455" width="558" height="1" fill="#000000" />
<rect x="670" y="113" width="1" height="343" fill="#000000"/>
<rect x="1227" y="113" width="1" height="343" fill="#000000"/>
<rect x="670" y="457" width="558" height="1" fill="#000000" />
<rect x="670" y="548" width="558" height="1" fill="#000000" />
<rect x="670" y="457" width="1" height="92" fill="#000000"/>
<rect x="1227" y="457" width="1" height="92" fill="#000000"/>
<rect x="670" y="550" width="558" height="1" fill="#000000" />
<rect x="670" y="709" width="558" height="1" fill="#000000" />
<rect x="670" y="550" width="1" height="160" fill="#000000"/>
<rect x="1227" y="550" width="1" height="160" fill="#000000"/>
<line x1="683" y1="130.5" x2="1227" y2="130.5" stroke="#dc143c" stroke-width="1" stroke-dasharray="9 6 3 6" stroke-dashoffset="0" shape-rendering="crispEdges"/>
<line x1="683" y1="149.5" x2="1227" y2="149.5" stroke="#dc143c" stroke-width="1" stroke-dasharray="9 6 3 6" stroke-dashoffset="0" shape-rendering="crispEdges"/>
<line x1="683" y1="168.5" x2="1227" y2="168.5" stroke="#dc143c" stroke-width="1" stroke-dasharray="9 6 3 6" stroke-dashoffset="0" shape-rendering="crispEdges"/>
<line x1="683" y1="190.5" x2="1227" y2="190.5" stroke="#dc143c" stroke-width="1" stroke-dasharray="9 6 3 6" stroke-dashoffset="0" shape-rendering="crispEdges"/>
<line x1="683" y1="209.5" x2="1227" y2="209.5" stroke="#dc143c" stroke-width="1" stroke-dasharray="9 6 3 6" stroke-dashoffset="0" shape-rendering="crispEdges"/>
<line x1="683" y1="228.5" x2="1227" y2="228.5" stroke="#dc143c" stroke-width="1" stroke-dasharray="9 6 3 6" stroke-dashoffset="0" shape-rendering="crispEdges"/>
<line x1="683" y1="250.5" x2="1227" y2="250.5" stroke="#dc143c" stroke-width="1" stroke-dasharray="9 6 3 6" stroke-dashoffset="0" shape-rendering="crispEdges"/>
<line x1="683" y1="269.5" x2="1227" y2="269.5" stroke="#dc143c" stroke-width="1" stroke-dasharray="9 6 3 6" stroke-dashoffset="0" shape-rendering="crispEdges"/>
<line x1="683" y1="287.5" x2="1227" y2="287.5" stroke="#dc143c" stroke-width="1" stroke-dasharray="9 6 3 6" stroke-dashoffset="0" shape-rendering="crispEdges"/>
<line x1="683" y1="346.5" x2="1227" y2="346.5" stroke="#dc143c" stroke-width="1" stroke-dasharray="9 6 3 6" stroke-dashoffset="0" shape-rendering="crispEdges"/>
<line x1="683" y1="384.5" x2="1227" y2="384.5" stroke="#dc143c" stroke-width="1" stroke-dasharray="9 6 3 6" stroke-dashoffset="0" shape-rendering="crispEdges"/>
<rect x="671" y="396" width="556" height="1" fill="#8a98a8" />
<line x1="755.5" y1="114" x2="755.5" y2="455" stroke="#000000" stroke-width="1" stroke-dasharray="3 3" stroke-dashoffset="1" shape-rendering="crispEdges"/>
<line x1="755.5" y1="458" x2="755.5" y2="548" stroke="#000000" stroke-width="1" stroke-dasharray="3 3" stroke-dashoffset="3" shape-rendering="crispEdges"/>
<line x1="755.5" y1="551" x2="755.5" y2="709" stroke="#000000" stroke-width="1" stroke-dasharray="3 3" stroke-dashoffset="0" shape-rendering="crispEdges"/>
<line x1="875.5" y1="114" x2="875.5" y2="455" stroke="#000000" stroke-width="1" stroke-dasharray="3 3" stroke-dashoffset="1" shape-rendering="crispEdges"/>
<line x1="875.5" y1="458" x2="875.5" y2="548" stroke="#000000" stroke-width="1" stroke-dasharray="3 3" stroke-dashoffset="3" shape-rendering="crispEdges"/>
<line x1="875.5" y1="551" x2="875.5" y2="709" stroke="#000000" stroke-width="1" stroke-dasharray="3 3" stroke-dashoffset="0" shape-rendering="crispEdges"/>
<line x1="995.5" y1="114" x2="995.5" y2="455" stroke="#000000" stroke-width="1" stroke-dasharray="3 3" stroke-dashoffset="1" shape-rendering="crispEdges"/>
<line x1="995.5" y1="458" x2="995.5" y2="548" stroke="#000000" stroke-width="1" stroke-dasharray="3 3" stroke-dashoffset="3" shape-rendering="crispEdges"/>
<line x1="995.5" y1="551" x2="995.5" y2="709" stroke="#000000" stroke-width="1" stroke-dasharray="3 3" stroke-dashoffset="0" shape-rendering="crispEdges"/>
<line x1="1139.5" y1="114" x2="1139.5" y2="455" stroke="#000000" stroke-width="1" stroke-dasharray="3 3" stroke-dashoffset="1" shape-rendering="crispEdges"/>
<line x1="1139.5" y1="458" x2="1139.5" y2="548" stroke="#000000" stroke-width="1" stroke-dasharray="3 3" stroke-dashoffset="3" shape-rendering="crispEdges"/>
<line x1="1139.5" y1="551" x2="1139.5" y2="709" stroke="#000000" stroke-width="1" stroke-dasharray="3 3" stroke-dashoffset="0" shape-rendering="crispEdges"/>
<line x1="672" y1="491.5" x2="1227" y2="491.5" stroke="#c0c0c0" stroke-width="1" stroke-dasharray="3 3" stroke-dashoffset="0" shape-rendering="crispEdges"/>
<line x1="672" y1="583.5" x2="1227" y2="583.5" stroke="#000000" stroke-width="1" stroke-dasharray="13 6" stroke-dashoffset="0" shape-rendering="crispEdges"/>
<line x1="672" y1="630.5" x2="1227" y2="630.5" stroke="#000000" stroke-width="1" stroke-dasharray="13 6" stroke-dashoffset="0" shape-rendering="crispEdges"/>
<line x1="672" y1="677.5" x2="1227" y2="677.5" stroke="#000000" stroke-width="1" stroke-dasharray="13 6" stroke-dashoffset="0" shape-rendering="crispEdges"/>
<rect x="1228" y="122" width="2" height="1" fill="#000000" />
<rect x="1228" y="155" width="2" height="1" fill="#000000" />
<rect x="1228" y="188" width="2" height="1" fill="#000000" />
<rect x="1228" y="221" width="2" height="1" fill="#000000" />
<rect x="1228" y="254" width="2" height="1" fill="#000000" />
<rect x="1228" y="287" width="2" height="1" fill="#000000" />
<rect x="1228" y="320" width="2" height="1" fill="#000000" />
<rect x="1228" y="353" width="2" height="1" fill="#000000" />
<rect x="1228" y="386" width="2" height="1" fill="#000000" />
<rect x="1228" y="419" width="2" height="1" fill="#000000" />
<rect x="1228" y="452" width="2" height="1" fill="#000000" />
<rect x="1228" y="464" width="2" height="1" fill="#000000" />
<rect x="1228" y="491" width="2" height="1" fill="#000000" />
<rect x="1228" y="541" width="2" height="1" fill="#000000" />
<rect x="1228" y="583" width="2" height="1" fill="#000000" />
<rect x="1228" y="630" width="2" height="1" fill="#000000" />
<rect x="1228" y="677" width="2" height="1" fill="#000000" />
<rect x="1228" y="709" width="2" height="1" fill="#000000" />
<rect x="671" y="710" width="1" height="4" fill="#000000"/>
<rect x="735" y="710" width="1" height="4" fill="#000000"/>
<rect x="799" y="710" width="1" height="4" fill="#000000"/>
<rect x="863" y="710" width="1" height="4" fill="#000000"/>
<rect x="927" y="710" width="1" height="4" fill="#000000"/>
<rect x="991" y="710" width="1" height="4" fill="#000000"/>
<rect x="1055" y="710" width="1" height="4" fill="#000000"/>
</g>
<line x1="683.5" y1="130.5" x2="843" y2="287.5" stroke="#ff0000" stroke-width="1" stroke-dasharray="3.5 4.5" shape-rendering="crispEdges"/>
<clipPath id="cpc"><rect x="671" y="114" width="556" height="341"/></clipPath>
<g shape-rendering="crispEdges" clip-path="url(#cpc)">
<rect x="671" y="163" width="1" height="21" fill="#00ff00"/>
<rect x="670.5" y="163.5" width="2" height="8" fill="#fff" stroke="#00ff00" stroke-width="1"/>
<rect x="675" y="158" width="1" height="19" fill="#00ff00"/>
<rect x="674.5" y="170.5" width="2" height="3" fill="#fff" stroke="#00ff00" stroke-width="1"/>
<rect x="679" y="167" width="1" height="13" fill="#00ff00"/>
<rect x="678" y="173" width="3" height="1" fill="#00ff00" />
<rect x="683" y="162" width="1" height="16" fill="#00ff00"/>
<rect x="682.5" y="168.5" width="2" height="6" fill="#000" stroke="#00ff00" stroke-width="1"/>
<rect x="687" y="164" width="1" height="15" fill="#00ff00"/>
<rect x="686.5" y="165.5" width="2" height="3" fill="#000" stroke="#00ff00" stroke-width="1"/>
<rect x="691" y="146" width="1" height="22" fill="#00ff00"/>
<rect x="690.5" y="154.5" width="2" height="11" fill="#000" stroke="#00ff00" stroke-width="1"/>
<rect x="695" y="151" width="1" height="18" fill="#00ff00"/>
<rect x="694.5" y="154.5" width="2" height="9" fill="#fff" stroke="#00ff00" stroke-width="1"/>
<rect x="699" y="151" width="1" height="15" fill="#00ff00"/>
<rect x="698.5" y="159.5" width="2" height="5" fill="#000" stroke="#00ff00" stroke-width="1"/>
<rect x="703" y="137" width="1" height="37" fill="#00ff00"/>
<rect x="702.5" y="145.5" width="2" height="14" fill="#000" stroke="#00ff00" stroke-width="1"/>
<rect x="707" y="138" width="1" height="11" fill="#00ff00"/>
<rect x="706.5" y="143.5" width="2" height="2" fill="#000" stroke="#00ff00" stroke-width="1"/>
<rect x="711" y="131" width="1" height="19" fill="#00ff00"/>
<rect x="710" y="142" width="3" height="2" fill="#00ff00" />
<rect x="715" y="137" width="1" height="20" fill="#00ff00"/>
<rect x="714.5" y="141.5" width="2" height="10" fill="#fff" stroke="#00ff00" stroke-width="1"/>
<rect x="719" y="149" width="1" height="19" fill="#00ff00"/>
<rect x="718.5" y="151.5" width="2" height="8" fill="#fff" stroke="#00ff00" stroke-width="1"/>
<rect x="723" y="145" width="1" height="19" fill="#00ff00"/>
<rect x="722.5" y="149.5" width="2" height="9" fill="#000" stroke="#00ff00" stroke-width="1"/>
<rect x="727" y="138" width="1" height="15" fill="#00ff00"/>
<rect x="726.5" y="145.5" width="2" height="4" fill="#000" stroke="#00ff00" stroke-width="1"/>
<rect x="731" y="142" width="1" height="18" fill="#00ff00"/>
<rect x="730.5" y="145.5" width="2" height="10" fill="#fff" stroke="#00ff00" stroke-width="1"/>
<rect x="735" y="144" width="1" height="13" fill="#00ff00"/>
<rect x="734" y="154" width="3" height="2" fill="#00ff00" />
<rect x="739" y="133" width="1" height="25" fill="#00ff00"/>
<rect x="738.5" y="145.5" width="2" height="8" fill="#000" stroke="#00ff00" stroke-width="1"/>
<rect x="743" y="139" width="1" height="12" fill="#00ff00"/>
<rect x="742" y="144" width="3" height="2" fill="#00ff00" />
<rect x="747" y="142" width="1" height="22" fill="#00ff00"/>
<rect x="746.5" y="144.5" width="2" height="11" fill="#fff" stroke="#00ff00" stroke-width="1"/>
<rect x="751" y="147" width="1" height="20" fill="#00ff00"/>
<rect x="750.5" y="155.5" width="2" height="5" fill="#fff" stroke="#00ff00" stroke-width="1"/>
<rect x="755" y="143" width="1" height="16" fill="#00ff00"/>
<rect x="754.5" y="147.5" width="2" height="10" fill="#000" stroke="#00ff00" stroke-width="1"/>
<rect x="759" y="142" width="1" height="8" fill="#00ff00"/>
<rect x="758" y="146" width="3" height="2" fill="#00ff00" />
<rect x="763" y="143" width="1" height="14" fill="#00ff00"/>
<rect x="762.5" y="146.5" width="2" height="8" fill="#fff" stroke="#00ff00" stroke-width="1"/>
<rect x="767" y="144" width="1" height="13" fill="#00ff00"/>
<rect x="766.5" y="151.5" width="2" height="3" fill="#000" stroke="#00ff00" stroke-width="1"/>
<rect x="771" y="149" width="1" height="17" fill="#00ff00"/>
<rect x="770.5" y="150.5" width="2" height="12" fill="#fff" stroke="#00ff00" stroke-width="1"/>
<rect x="775" y="155" width="1" height="13" fill="#00ff00"/>
<rect x="774" y="161" width="3" height="2" fill="#00ff00" />
<rect x="779" y="147" width="1" height="14" fill="#00ff00"/>
<rect x="778.5" y="153.5" width="2" height="4" fill="#000" stroke="#00ff00" stroke-width="1"/>
<rect x="783" y="148" width="1" height="12" fill="#00ff00"/>
<rect x="782" y="154" width="3" height="2" fill="#00ff00" />
<rect x="787" y="153" width="1" height="22" fill="#00ff00"/>
<rect x="786.5" y="153.5" width="2" height="13" fill="#fff" stroke="#00ff00" stroke-width="1"/>
<rect x="791" y="155" width="1" height="15" fill="#00ff00"/>
<rect x="790.5" y="159.5" width="2" height="7" fill="#000" stroke="#00ff00" stroke-width="1"/>
<rect x="795" y="146" width="1" height="58" fill="#00ff00"/>
<rect x="794.5" y="159.5" width="2" height="31" fill="#fff" stroke="#00ff00" stroke-width="1"/>
<rect x="799" y="185" width="1" height="16" fill="#00ff00"/>
<rect x="798.5" y="189.5" width="2" height="10" fill="#fff" stroke="#00ff00" stroke-width="1"/>
<rect x="803" y="186" width="1" height="46" fill="#00ff00"/>
<rect x="802.5" y="196.5" width="2" height="30" fill="#fff" stroke="#00ff00" stroke-width="1"/>
<rect x="807" y="221" width="1" height="30" fill="#00ff00"/>
<rect x="806.5" y="226.5" width="2" height="21" fill="#fff" stroke="#00ff00" stroke-width="1"/>
<rect x="811" y="240" width="1" height="16" fill="#00ff00"/>
<rect x="810.5" y="247.5" width="2" height="5" fill="#fff" stroke="#00ff00" stroke-width="1"/>
<rect x="815" y="235" width="1" height="19" fill="#00ff00"/>
<rect x="814.5" y="238.5" width="2" height="14" fill="#000" stroke="#00ff00" stroke-width="1"/>
<rect x="819" y="225" width="1" height="16" fill="#00ff00"/>
<rect x="818.5" y="233.5" width="2" height="5" fill="#000" stroke="#00ff00" stroke-width="1"/>
<rect x="823" y="232" width="1" height="14" fill="#00ff00"/>
<rect x="822.5" y="233.5" width="2" height="12" fill="#fff" stroke="#00ff00" stroke-width="1"/>
<rect x="827" y="229" width="1" height="18" fill="#00ff00"/>
<rect x="826.5" y="237.5" width="2" height="8" fill="#fff" stroke="#00ff00" stroke-width="1"/>
<rect x="831" y="239" width="1" height="23" fill="#00ff00"/>
<rect x="830.5" y="245.5" width="2" height="5" fill="#fff" stroke="#00ff00" stroke-width="1"/>
<rect x="835" y="241" width="1" height="18" fill="#00ff00"/>
<rect x="834" y="249" width="3" height="2" fill="#00ff00" />
<rect x="839" y="240" width="1" height="27" fill="#00ff00"/>
<rect x="838.5" y="243.5" width="2" height="7" fill="#000" stroke="#00ff00" stroke-width="1"/>
<rect x="843" y="237" width="1" height="26" fill="#00ff00"/>
<rect x="842.5" y="243.5" width="2" height="5" fill="#fff" stroke="#00ff00" stroke-width="1"/>
<rect x="847" y="241" width="1" height="42" fill="#00ff00"/>
<rect x="846.5" y="248.5" width="2" height="33" fill="#fff" stroke="#00ff00" stroke-width="1"/>
<rect x="851" y="269" width="1" height="21" fill="#00ff00"/>
<rect x="850" y="281" width="3" height="2" fill="#00ff00" />
<rect x="855" y="261" width="1" height="25" fill="#00ff00"/>
<rect x="854.5" y="264.5" width="2" height="18" fill="#000" stroke="#00ff00" stroke-width="1"/>
<rect x="859" y="251" width="1" height="16" fill="#00ff00"/>
<rect x="858" y="263" width="3" height="2" fill="#00ff00" />
<rect x="863" y="252" width="1" height="20" fill="#00ff00"/>
<rect x="862.5" y="264.5" width="2" height="5" fill="#fff" stroke="#00ff00" stroke-width="1"/>
<rect x="867" y="257" width="1" height="24" fill="#00ff00"/>
<rect x="866.5" y="260.5" width="2" height="9" fill="#000" stroke="#00ff00" stroke-width="1"/>
<rect x="871" y="253" width="1" height="19" fill="#00ff00"/>
<rect x="870" y="259" width="3" height="2" fill="#00ff00" />
<rect x="875" y="233" width="1" height="22" fill="#00ff00"/>
<rect x="874.5" y="245.5" width="2" height="5" fill="#fff" stroke="#00ff00" stroke-width="1"/>
<rect x="879" y="229" width="1" height="24" fill="#00ff00"/>
<rect x="878.5" y="233.5" width="2" height="17" fill="#000" stroke="#00ff00" stroke-width="1"/>
<rect x="883" y="232" width="1" height="19" fill="#00ff00"/>
<rect x="882.5" y="233.5" width="2" height="17" fill="#fff" stroke="#00ff00" stroke-width="1"/>
<rect x="887" y="244" width="1" height="14" fill="#00ff00"/>
<rect x="886.5" y="249.5" width="2" height="6" fill="#fff" stroke="#00ff00" stroke-width="1"/>
<rect x="891" y="246" width="1" height="12" fill="#00ff00"/>
<rect x="890" y="253" width="3" height="2" fill="#00ff00" />
<rect x="895" y="249" width="1" height="11" fill="#00ff00"/>
<rect x="894.5" y="253.5" width="2" height="4" fill="#fff" stroke="#00ff00" stroke-width="1"/>
<rect x="899" y="251" width="1" height="20" fill="#00ff00"/>
<rect x="898" y="264" width="3" height="2" fill="#00ff00" />
<rect x="903" y="251" width="1" height="19" fill="#00ff00"/>
<rect x="902" y="265" width="3" height="2" fill="#00ff00" />
<rect x="907" y="258" width="1" height="20" fill="#00ff00"/>
<rect x="906.5" y="265.5" width="2" height="7" fill="#fff" stroke="#00ff00" stroke-width="1"/>
<rect x="911" y="249" width="1" height="36" fill="#00ff00"/>
<rect x="910.5" y="251.5" width="2" height="21" fill="#000" stroke="#00ff00" stroke-width="1"/>
<rect x="915" y="247" width="1" height="39" fill="#00ff00"/>
<rect x="914.5" y="250.5" width="2" height="33" fill="#fff" stroke="#00ff00" stroke-width="1"/>
<rect x="919" y="271" width="1" height="14" fill="#00ff00"/>
<rect x="918.5" y="275.5" width="2" height="8" fill="#000" stroke="#00ff00" stroke-width="1"/>
<rect x="923" y="265" width="1" height="16" fill="#00ff00"/>
<rect x="922.5" y="275.5" width="2" height="2" fill="#fff" stroke="#00ff00" stroke-width="1"/>
<rect x="927" y="259" width="1" height="19" fill="#00ff00"/>
<rect x="926.5" y="261.5" width="2" height="15" fill="#000" stroke="#00ff00" stroke-width="1"/>
<rect x="931" y="253" width="1" height="14" fill="#00ff00"/>
<rect x="930.5" y="254.5" width="2" height="7" fill="#000" stroke="#00ff00" stroke-width="1"/>
<rect x="935" y="253" width="1" height="12" fill="#00ff00"/>
<rect x="934.5" y="254.5" width="2" height="4" fill="#fff" stroke="#00ff00" stroke-width="1"/>
<rect x="939" y="255" width="1" height="15" fill="#00ff00"/>
<rect x="938" y="258" width="3" height="1" fill="#00ff00" />
<rect x="943" y="238" width="1" height="24" fill="#00ff00"/>
<rect x="942.5" y="245.5" width="2" height="13" fill="#000" stroke="#00ff00" stroke-width="1"/>
<rect x="947" y="242" width="1" height="91" fill="#00ff00"/>
<rect x="946.5" y="247.5" width="2" height="71" fill="#fff" stroke="#00ff00" stroke-width="1"/>
<rect x="951" y="309" width="1" height="38" fill="#00ff00"/>
<rect x="950.5" y="318.5" width="2" height="25" fill="#fff" stroke="#00ff00" stroke-width="1"/>
<rect x="955" y="339" width="1" height="20" fill="#00ff00"/>
<rect x="954" y="342" width="3" height="2" fill="#00ff00" />
<rect x="959" y="332" width="1" height="13" fill="#00ff00"/>
<rect x="958.5" y="338.5" width="2" height="4" fill="#000" stroke="#00ff00" stroke-width="1"/>
<rect x="963" y="333" width="1" height="21" fill="#00ff00"/>
<rect x="962.5" y="338.5" width="2" height="3" fill="#fff" stroke="#00ff00" stroke-width="1"/>
<rect x="967" y="340" width="1" height="16" fill="#00ff00"/>
<rect x="966.5" y="341.5" width="2" height="13" fill="#fff" stroke="#00ff00" stroke-width="1"/>
<rect x="971" y="341" width="1" height="24" fill="#00ff00"/>
<rect x="970.5" y="344.5" width="2" height="11" fill="#000" stroke="#00ff00" stroke-width="1"/>
<rect x="975" y="342" width="1" height="16" fill="#00ff00"/>
<rect x="974.5" y="345.5" width="2" height="6" fill="#fff" stroke="#00ff00" stroke-width="1"/>
<rect x="979" y="347" width="1" height="29" fill="#00ff00"/>
<rect x="978.5" y="352.5" width="2" height="23" fill="#fff" stroke="#00ff00" stroke-width="1"/>
<rect x="983" y="370" width="1" height="12" fill="#00ff00"/>
<rect x="982" y="375" width="3" height="1" fill="#00ff00" />
<rect x="987" y="366" width="1" height="12" fill="#00ff00"/>
<rect x="986" y="373" width="3" height="2" fill="#00ff00" />
<rect x="991" y="366" width="1" height="10" fill="#00ff00"/>
<rect x="990" y="371" width="3" height="2" fill="#00ff00" />
<rect x="995" y="366" width="1" height="14" fill="#00ff00"/>
<rect x="994.5" y="369.5" width="2" height="10" fill="#fff" stroke="#00ff00" stroke-width="1"/>
<rect x="999" y="375" width="1" height="13" fill="#00ff00"/>
<rect x="998.5" y="379.5" width="2" height="7" fill="#fff" stroke="#00ff00" stroke-width="1"/>
<rect x="1003" y="379" width="1" height="11" fill="#00ff00"/>
<rect x="1002.5" y="380.5" width="2" height="5" fill="#000" stroke="#00ff00" stroke-width="1"/>
<rect x="1007" y="362" width="1" height="18" fill="#00ff00"/>
<rect x="1006.5" y="370.5" width="2" height="9" fill="#000" stroke="#00ff00" stroke-width="1"/>
<rect x="1011" y="366" width="1" height="12" fill="#00ff00"/>
<rect x="1010" y="374" width="3" height="2" fill="#00ff00" />
<rect x="1015" y="371" width="1" height="7" fill="#00ff00"/>
<rect x="1014.5" y="374.5" width="2" height="3" fill="#fff" stroke="#00ff00" stroke-width="1"/>
<rect x="1019" y="366" width="1" height="14" fill="#00ff00"/>
<rect x="1018.5" y="368.5" width="2" height="8" fill="#000" stroke="#00ff00" stroke-width="1"/>
<rect x="1023" y="366" width="1" height="38" fill="#00ff00"/>
<rect x="1022.5" y="368.5" width="2" height="29" fill="#fff" stroke="#00ff00" stroke-width="1"/>
<rect x="1027" y="395" width="1" height="15" fill="#00ff00"/>
<rect x="1026.5" y="397.5" width="2" height="7" fill="#fff" stroke="#00ff00" stroke-width="1"/>
<rect x="1031" y="396" width="1" height="14" fill="#00ff00"/>
<rect x="1030" y="404" width="3" height="2" fill="#00ff00" />
<rect x="1035" y="397" width="1" height="24" fill="#00ff00"/>
<rect x="1034.5" y="404.5" width="2" height="8" fill="#fff" stroke="#00ff00" stroke-width="1"/>
<rect x="1039" y="409" width="1" height="10" fill="#00ff00"/>
<rect x="1038" y="412" width="3" height="1" fill="#00ff00" />
<rect x="1043" y="402" width="1" height="12" fill="#00ff00"/>
<rect x="1042.5" y="407.5" width="2" height="4" fill="#000" stroke="#00ff00" stroke-width="1"/>
<rect x="1047" y="402" width="1" height="6" fill="#00ff00"/>
<rect x="1046.5" y="404.5" width="2" height="2" fill="#000" stroke="#00ff00" stroke-width="1"/>
<rect x="1051" y="402" width="1" height="8" fill="#00ff00"/>
<rect x="1050.5" y="403.5" width="2" height="6" fill="#fff" stroke="#00ff00" stroke-width="1"/>
<rect x="1055" y="401" width="1" height="28" fill="#00ff00"/>
<rect x="1054.5" y="409.5" width="2" height="14" fill="#fff" stroke="#00ff00" stroke-width="1"/>
<rect x="1059" y="422" width="1" height="25" fill="#00ff00"/>
<rect x="1058.5" y="424.5" width="2" height="9" fill="#fff" stroke="#00ff00" stroke-width="1"/>
<rect x="1063" y="402" width="1" height="42" fill="#00ff00"/>
<rect x="1062.5" y="423.5" width="2" height="9" fill="#000" stroke="#00ff00" stroke-width="1"/>
<rect x="1067" y="418" width="1" height="10" fill="#00ff00"/>
<rect x="1066.5" y="421.5" width="2" height="2" fill="#000" stroke="#00ff00" stroke-width="1"/>
<rect x="1071" y="408" width="1" height="18" fill="#00ff00"/>
<rect x="1070.5" y="409.5" width="2" height="11" fill="#000" stroke="#00ff00" stroke-width="1"/>
<rect x="1075" y="398" width="1" height="35" fill="#00ff00"/>
<rect x="1074.5" y="409.5" width="2" height="14" fill="#fff" stroke="#00ff00" stroke-width="1"/>
<rect x="1079" y="416" width="1" height="23" fill="#00ff00"/>
<rect x="1078.5" y="426.5" width="2" height="2" fill="#fff" stroke="#00ff00" stroke-width="1"/>
<rect x="1083" y="416" width="1" height="19" fill="#00ff00"/>
<rect x="1082" y="428" width="3" height="2" fill="#00ff00" />
<rect x="1087" y="412" width="1" height="20" fill="#00ff00"/>
<rect x="1086.5" y="418.5" width="2" height="12" fill="#000" stroke="#00ff00" stroke-width="1"/>
<rect x="1091" y="405" width="1" height="14" fill="#00ff00"/>
<rect x="1090.5" y="408.5" width="2" height="10" fill="#000" stroke="#00ff00" stroke-width="1"/>
<rect x="1095" y="405" width="1" height="19" fill="#00ff00"/>
<rect x="1094.5" y="408.5" width="2" height="10" fill="#fff" stroke="#00ff00" stroke-width="1"/>
<rect x="1099" y="416" width="1" height="15" fill="#00ff00"/>
<rect x="1098.5" y="418.5" width="2" height="8" fill="#fff" stroke="#00ff00" stroke-width="1"/>
<rect x="1103" y="394" width="1" height="53" fill="#00ff00"/>
<rect x="1102.5" y="401.5" width="2" height="25" fill="#000" stroke="#00ff00" stroke-width="1"/>
<rect x="1107" y="391" width="1" height="26" fill="#00ff00"/>
<rect x="1106.5" y="397.5" width="2" height="4" fill="#000" stroke="#00ff00" stroke-width="1"/>
</g>
<text x="1132.3" y="128" fill="#dc143c" stroke="#dc143c" stroke-width="0.3" font-size="10" text-anchor="start" xml:space="preserve"  textLength="93.7" lengthAdjust="spacingAndGlyphs">100.0/0.0 (0.88361) 12</text>
<text x="1132.3" y="147" fill="#dc143c" stroke="#dc143c" stroke-width="0.3" font-size="10" text-anchor="start" xml:space="preserve"  textLength="93.7" lengthAdjust="spacingAndGlyphs">88.2/11.8 (0.88142) 13</text>
<text x="1132.3" y="166" fill="#dc143c" stroke="#dc143c" stroke-width="0.3" font-size="10" text-anchor="start" xml:space="preserve"  textLength="93.7" lengthAdjust="spacingAndGlyphs">76.4/23.6 (0.87922) 14</text>
<text x="1132.3" y="188" fill="#dc143c" stroke="#dc143c" stroke-width="0.3" font-size="10" text-anchor="start" xml:space="preserve"  textLength="93.7" lengthAdjust="spacingAndGlyphs">61.8/38.2 (0.87650) 15</text>
<text x="1132.3" y="207" fill="#dc143c" stroke="#dc143c" stroke-width="0.3" font-size="10" text-anchor="start" xml:space="preserve"  textLength="93.7" lengthAdjust="spacingAndGlyphs">50.0/50.0 (0.87430) 16</text>
<text x="1132.3" y="226" fill="#dc143c" stroke="#dc143c" stroke-width="0.3" font-size="10" text-anchor="start" xml:space="preserve"  textLength="93.7" lengthAdjust="spacingAndGlyphs">38.2/61.8 (0.87210) 17</text>
<text x="1132.3" y="248" fill="#dc143c" stroke="#dc143c" stroke-width="0.3" font-size="10" text-anchor="start" xml:space="preserve"  textLength="93.7" lengthAdjust="spacingAndGlyphs">23.6/76.4 (0.86938) 18</text>
<text x="1132.3" y="267" fill="#dc143c" stroke="#dc143c" stroke-width="0.3" font-size="10" text-anchor="start" xml:space="preserve"  textLength="93.7" lengthAdjust="spacingAndGlyphs">11.8/88.2 (0.86718) 19</text>
<text x="1132.3" y="285" fill="#dc143c" stroke="#dc143c" stroke-width="0.3" font-size="10" text-anchor="start" xml:space="preserve"  textLength="93.7" lengthAdjust="spacingAndGlyphs">0.0/100.0 (0.86499) 20</text>
<text x="1148.7" y="344" fill="#dc143c" stroke="#dc143c" stroke-width="0.3" font-size="10" text-anchor="start" xml:space="preserve"  textLength="77.1" lengthAdjust="spacingAndGlyphs">138.2-(0.85787) 11</text>
<text x="1148.7" y="382" fill="#dc143c" stroke="#dc143c" stroke-width="0.3" font-size="10" text-anchor="start" xml:space="preserve"  textLength="77.1" lengthAdjust="spacingAndGlyphs">161.8-(0.85348) 10</text>
<clipPath id="cpm"><rect x="671" y="114" width="556" height="341"/></clipPath>
<g clip-path="url(#cpm)">
<text x="1151" y="460.5" fill="#dc143c" stroke="#dc143c" stroke-width="0.3" font-size="10" text-anchor="start" xml:space="preserve"  textLength="74.8" lengthAdjust="spacingAndGlyphs">211.8-(0.84431) 9</text>
</g>
<text x="1233.3" y="124.7" fill="#000000" stroke="#000000" stroke-width="0.3" font-size="10" text-anchor="start" xml:space="preserve"  textLength="32.6" lengthAdjust="spacingAndGlyphs">0.88460</text>
<text x="1233.3" y="157.7" fill="#000000" stroke="#000000" stroke-width="0.3" font-size="10" text-anchor="start" xml:space="preserve"  textLength="32.6" lengthAdjust="spacingAndGlyphs">0.88070</text>
<text x="1233.3" y="190.7" fill="#000000" stroke="#000000" stroke-width="0.3" font-size="10" text-anchor="start" xml:space="preserve"  textLength="32.6" lengthAdjust="spacingAndGlyphs">0.87680</text>
<text x="1233.3" y="223.7" fill="#000000" stroke="#000000" stroke-width="0.3" font-size="10" text-anchor="start" xml:space="preserve"  textLength="32.6" lengthAdjust="spacingAndGlyphs">0.87280</text>
<text x="1233.3" y="256.7" fill="#000000" stroke="#000000" stroke-width="0.3" font-size="10" text-anchor="start" xml:space="preserve"  textLength="32.6" lengthAdjust="spacingAndGlyphs">0.86890</text>
<text x="1233.3" y="289.7" fill="#000000" stroke="#000000" stroke-width="0.3" font-size="10" text-anchor="start" xml:space="preserve"  textLength="32.6" lengthAdjust="spacingAndGlyphs">0.86500</text>
<text x="1233.3" y="322.7" fill="#000000" stroke="#000000" stroke-width="0.3" font-size="10" text-anchor="start" xml:space="preserve"  textLength="32.6" lengthAdjust="spacingAndGlyphs">0.86110</text>
<text x="1233.3" y="355.7" fill="#000000" stroke="#000000" stroke-width="0.3" font-size="10" text-anchor="start" xml:space="preserve"  textLength="32.6" lengthAdjust="spacingAndGlyphs">0.85720</text>
<text x="1233.3" y="388.7" fill="#000000" stroke="#000000" stroke-width="0.3" font-size="10" text-anchor="start" xml:space="preserve"  textLength="32.6" lengthAdjust="spacingAndGlyphs">0.85320</text>
<text x="1233.3" y="421.7" fill="#000000" stroke="#000000" stroke-width="0.3" font-size="10" text-anchor="start" xml:space="preserve"  textLength="32.6" lengthAdjust="spacingAndGlyphs">0.84930</text>
<text x="1233.3" y="454.7" fill="#000000" stroke="#000000" stroke-width="0.3" font-size="10" text-anchor="start" xml:space="preserve"  textLength="32.6" lengthAdjust="spacingAndGlyphs">0.84540</text>
<clipPath id="cpa"><rect x="1229" y="110" width="40" height="620"/></clipPath>
<g clip-path="url(#cpa)">
<text x="1231.2" y="468.5" fill="#000000" stroke="#000000" stroke-width="0.3" font-size="10" text-anchor="start" xml:space="preserve"  textLength="37.3" lengthAdjust="spacingAndGlyphs">0.006057</text>
<text x="1232" y="545" fill="#000000" stroke="#000000" stroke-width="0.3" font-size="10" text-anchor="start" xml:space="preserve"  textLength="37" lengthAdjust="spacingAndGlyphs">-0.01050</text>
</g>
<text x="1230.2" y="494.4" fill="#000000" stroke="#000000" stroke-width="0.3" font-size="10" text-anchor="start" xml:space="preserve" >0</text>
<text x="1231" y="494.4" fill="#000000" stroke="#000000" stroke-width="0.3" font-size="10" text-anchor="start" xml:space="preserve"  textLength="17.5" lengthAdjust="spacingAndGlyphs">0.00</text>
<text x="1231" y="561.4" fill="#000000" stroke="#000000" stroke-width="0.3" font-size="10" text-anchor="start" xml:space="preserve"  textLength="4.9" lengthAdjust="spacingAndGlyphs">0</text>
<text x="1231" y="586.6" fill="#000000" stroke="#000000" stroke-width="0.3" font-size="10" text-anchor="start" xml:space="preserve"  textLength="12.9" lengthAdjust="spacingAndGlyphs">-20</text>
<text x="1231" y="633.6" fill="#000000" stroke="#000000" stroke-width="0.3" font-size="10" text-anchor="start" xml:space="preserve"  textLength="12.9" lengthAdjust="spacingAndGlyphs">-50</text>
<text x="1231" y="680.6" fill="#000000" stroke="#000000" stroke-width="0.3" font-size="10" text-anchor="start" xml:space="preserve"  textLength="12.9" lengthAdjust="spacingAndGlyphs">-80</text>
<text x="1231" y="706.5" fill="#000000" stroke="#000000" stroke-width="0.3" font-size="10" text-anchor="start" xml:space="preserve"  textLength="18" lengthAdjust="spacingAndGlyphs">-100</text>
<rect x="1229" y="390" width="38" height="11" fill="#000"/>
<text x="1233.4" y="398.7" fill="#fff" stroke="#fff" stroke-width="0.3" font-size="10" text-anchor="start" xml:space="preserve"  textLength="32.5" lengthAdjust="spacingAndGlyphs">0.85202</text>
<text x="670.9" y="722.1" fill="#000000" stroke="#000000" stroke-width="0.3" font-size="10" text-anchor="start" xml:space="preserve"  textLength="40.7" lengthAdjust="spacingAndGlyphs">8 Jul 2014</text>
<text x="735.1" y="722.1" fill="#000000" stroke="#000000" stroke-width="0.3" font-size="10" text-anchor="start" xml:space="preserve"  textLength="48.8" lengthAdjust="spacingAndGlyphs">11 Jul 04:00</text>
<text x="799" y="722.1" fill="#000000" stroke="#000000" stroke-width="0.3" font-size="10" text-anchor="start" xml:space="preserve"  textLength="48.8" lengthAdjust="spacingAndGlyphs">15 Jul 20:00</text>
<text x="863" y="722.1" fill="#000000" stroke="#000000" stroke-width="0.3" font-size="10" text-anchor="start" xml:space="preserve"  textLength="48.8" lengthAdjust="spacingAndGlyphs">18 Jul 12:00</text>
<text x="927.2" y="722.1" fill="#000000" stroke="#000000" stroke-width="0.3" font-size="10" text-anchor="start" xml:space="preserve"  textLength="48.2" lengthAdjust="spacingAndGlyphs">23 Jul 04:00</text>
<text x="991" y="722.1" fill="#000000" stroke="#000000" stroke-width="0.3" font-size="10" text-anchor="start" xml:space="preserve"  textLength="48.7" lengthAdjust="spacingAndGlyphs">25 Jul 20:00</text>
<text x="1055.2" y="722.1" fill="#000000" stroke="#000000" stroke-width="0.3" font-size="10" text-anchor="start" xml:space="preserve"  textLength="48.2" lengthAdjust="spacingAndGlyphs">30 Jul 12:00</text>
<rect x="686" y="117" width="201" height="11" fill="#fff"/>
<text x="686.7" y="124.9" fill="#000000" stroke="#000000" stroke-width="0.3" font-size="10" text-anchor="start" xml:space="preserve"  textLength="199.7" lengthAdjust="spacingAndGlyphs">NZDUSD,H4  0.85143 0.85270 0.84982 0.85202</text>
<path d="M674.6 120.5h7l-3.5 4z" fill="#000"/>
<path d="M1107 114h9l-4.5 4.5z" fill="#6a7a90"/>
<text x="675.8" y="469.4" fill="#000000" stroke="#000000" stroke-width="0.3" font-size="10" text-anchor="start" xml:space="preserve"  textLength="82.8" lengthAdjust="spacingAndGlyphs">AO_Zotik -0.002010</text>
<text x="674.9" y="562.4" fill="#000000" stroke="#000000" stroke-width="0.3" font-size="10" text-anchor="start" xml:space="preserve"  textLength="160.6" lengthAdjust="spacingAndGlyphs">WPR_VSmark(21|55|77|277) -72.6937</text>
<polyline points="671.1,493.0 683.6,491.3 699.3,488.0 714.9,485.8 730.5,484.7 744.6,485.0 752.4,487.3 761.8,487.8 777.4,492.5 789.9,494.0 805.5,499.5 821.1,504.2 836.8,505.8 855.5,505.3 868.0,503.0 874.0,502.7 880.3,500.0 899.0,496.0 911.6,492.2 922.5,490.2 933.4,486.3 942.8,485.2 952.2,489.0 964.7,492.2 974.0,494.0 989.7,499.2 1000.6,500.6 1011.6,500.6 1024.0,498.8 1039.7,497.5 1062.2,495.5 1079.6,489.4 1093.9,487.9 1106.6,486.3" fill="none" stroke="#000" stroke-width="1" stroke-linejoin="round" stroke-linecap="round" shape-rendering="crispEdges"/>
<polyline points="671.1,484.2 683.6,482.3 699.3,480.0 708.6,478.4 727.4,476.9 743.0,476.9 749.3,478.0 761.8,478.0 774.3,479.7 789.9,480.8 800.8,486.3 808.6,491.7 819.6,496.4 833.6,501.0 843.0,503.4 849.3,506.6 860.2,508.9 868.0,508.9 878.8,509.0 885.0,507.3 914.7,507.3 927.2,507.8 935.0,506.6 942.0,505.0 947.5,507.3 953.8,510.5 966.3,515.2 981.9,519.8 991.3,521.4 1000.6,523.8 1014.7,523.8 1017.8,523.0 1025.6,524.0 1036.6,525.6 1047.5,525.6 1060.0,526.0 1068.5,526.4 1082.8,524.8 1093.9,522.7 1103.4,520.3 1107.4,520.0" fill="none" stroke="#007800" stroke-width="2.6" stroke-linejoin="round" stroke-linecap="round" shape-rendering="crispEdges"/>
<polyline points="671.1,479.7 675.8,473.8 683.6,474.5 688.3,474.5 693.0,470.6 699.3,469.0 707.0,466.7 713.3,462.8 716.4,463.0 722.7,469.8 736.8,470.6 746.1,471.4 753.9,477.7 764.9,478.4 771.1,482.3 777.4,487.5 786.8,488.6 793.0,493.3 797.7,500.3 802.4,509.7 807.0,523.8 811.0,533.0 814.9,541.0 818.0,540.0 827.4,534.0 835.2,536.6 839.9,536.6 846.1,534.7 855.5,541.0 857.8,540.0 863.3,531.6 870.9,528.0 875.6,521.4 883.4,509.0 891.3,509.0 903.8,509.7 911.6,509.7 916.3,508.0 922.5,506.6 927.2,506.3 931.9,499.5 936.6,495.3 943.6,492.2 946.7,495.6 950.6,506.6 955.3,528.4 960.0,537.8 966.3,537.0 978.8,537.0 987.3,542.8 992.8,542.8 996.7,540.6 1006.0,540.6 1014.7,530.8 1019.4,528.0 1023.3,528.0 1028.8,533.0 1035.0,537.0 1041.3,536.6 1046.3,532.7 1053.5,526.4 1060.6,530.0 1067.7,530.0 1074.0,518.4 1079.6,514.8 1087.5,513.7 1096.3,505.0 1103.4,504.5 1107.4,503.0" fill="none" stroke="#ff0000" stroke-width="2.2" stroke-linejoin="round" stroke-linecap="round" shape-rendering="crispEdges"/>
<polyline points="670.7,579.5 674.7,583.5 679.2,585.0 691.6,564.9 696.0,583.5 708.4,558.8 719.7,592.9 722.0,586.0 722.0,581.7 725.3,579.5 732.0,596.3 735.4,594.0 739.9,577.2 744.4,585.0 751.1,642.4 755.6,603.7 759.0,603.0 763.5,627.8 766.9,616.5 771.4,668.2 775.9,658.0 779.2,634.5 783.0,635.6 787.0,684.0 791.2,658.0 795.0,676.0 799.5,698.6 805.0,703.0 810.7,705.3 815.2,691.8 819.0,681.7 823.0,695.2 824.5,696.3 834.6,694.0 839.0,679.5 843.6,688.4 848.0,707.5 851.5,700.8 856.0,681.7 859.3,682.8 863.8,686.2 868.3,678.3 872.8,677.2 876.2,662.6 879.6,624.4 883.4,649.0 887.4,633.4 891.5,624.4 895.3,630.0 899.8,650.2 903.0,648.0 907.6,666.0 911.0,611.6 915.5,695.2 923.4,676.0 927.9,633.4 931.7,620.0 935.3,633.4 939.0,631.6 943.1,596.3 947.0,680.6 951.5,705.3 956.0,690.7 960.4,685.0 963.8,689.6 967.2,703.0 971.7,684.0 973.4,690.7 979.0,708.7 983.5,702.0 991.3,698.0 995.8,707.6 999.2,708.7 1007.0,690.7 1015.0,695.2 1019.4,687.3 1024.0,705.3 1027.3,705.3 1036.3,696.3 1039.7,695.9 1047.5,676.0 1055.4,706.4 1062.6,667.0 1067.0,662.0 1071.6,639.7 1075.6,661.5 1080.0,677.2 1083.5,678.3 1091.3,633.0 1099.2,672.7 1103.7,622.0 1105.5,590.7 1107.5,568.7" fill="none" stroke="#ff0000" stroke-width="1" stroke-linejoin="round" stroke-linecap="round" shape-rendering="crispEdges"/>
<polyline points="670.7,574.5 679.2,585.0 691.6,564.9 696.0,583.5 708.4,558.8 719.7,592.9 727.6,573.8 731.0,587.3 741.0,576.0 751.1,596.3 755.6,576.0 759.0,575.0 762.4,584.0 766.9,580.6 771.4,597.9 775.9,595.2 780.4,585.8 783.7,587.3 788.2,604.2 791.6,595.6 795.0,626.7 799.5,651.4 802.8,680.6 805.0,700.8 810.7,705.3 815.2,691.8 819.7,681.7 823.0,695.2 824.5,696.3 834.6,694.6 839.0,680.0 843.6,689.0 848.0,708.0 851.5,701.5 856.0,682.3 863.8,687.5 868.3,680.0 872.8,679.0 876.2,669.0 879.6,653.6 884.0,671.0 887.4,676.0 893.0,675.0 899.8,682.8 903.0,685.0 907.6,693.0 911.0,671.0 915.5,703.0 918.9,697.4 923.4,696.0 927.9,682.0 931.7,675.0 935.3,678.0 939.0,677.5 943.1,664.5 947.0,691.8 951.5,706.4 956.0,697.0 960.4,694.5 963.8,697.0 967.2,705.3 971.7,695.0 975.0,699.0 979.0,708.7 983.5,704.0 991.3,701.0 999.2,708.7 1007.0,698.0 1015.0,699.0 1019.4,693.0 1024.0,704.0 1036.3,703.0 1047.5,695.2 1055.4,705.3 1062.6,693.0 1067.0,690.7 1071.6,683.5 1075.6,691.4 1080.0,696.3 1083.5,697.4 1091.3,681.7 1099.2,695.2 1103.7,676.0 1107.0,672.0" fill="none" stroke="#1e90ff" stroke-width="1" stroke-linejoin="round" stroke-linecap="round" shape-rendering="crispEdges"/>
<polyline points="670.7,569.3 678.0,573.0 690.5,562.0 695.0,571.6 707.3,558.0 720.8,582.8 727.6,567.8 732.0,576.8 741.0,564.9 745.5,569.3 752.3,584.0 756.8,569.3 760.0,571.6 763.5,585.0 766.9,580.6 771.4,597.9 775.9,595.2 780.4,585.8 783.7,587.3 788.2,604.2 791.6,595.6 795.0,626.7 799.5,651.4 802.8,680.6 805.0,700.8 810.7,705.3 815.2,691.8 819.7,681.7 823.0,695.2 824.5,696.3 834.6,695.2 839.0,680.6 843.6,689.6 848.0,708.0 851.5,702.0 856.0,682.8 863.8,688.4 868.3,680.6 872.8,679.5 876.2,669.3 879.6,653.6 884.0,671.0 887.4,676.0 893.0,675.0 899.8,682.8 903.0,685.0 907.6,693.0 911.0,671.0 915.5,703.0 918.9,697.4 923.4,696.3 927.9,682.8 931.7,676.0 935.3,678.3 939.0,678.0 943.1,666.0 947.0,691.8 951.5,706.4 956.0,698.0 960.4,695.2 963.8,697.4 967.2,705.3 971.7,695.9 975.0,699.7 979.0,709.3 983.5,705.3 991.3,703.0 999.2,709.3 1007.0,699.7 1015.0,702.0 1019.4,696.3 1024.0,706.4 1036.3,705.8 1047.5,700.8 1055.4,707.5 1062.6,698.6 1067.0,696.3 1071.6,690.0 1075.6,696.3 1080.0,700.8 1083.5,700.8 1091.3,689.0 1099.2,698.0 1103.7,682.8 1107.0,680.0" fill="none" stroke="#9400d3" stroke-width="1" stroke-linejoin="round" stroke-linecap="round" shape-rendering="crispEdges"/>
<polyline points="670.7,558.0 679.2,557.0 690.5,555.2 696.0,558.0 704.0,555.2 709.6,555.9 713.0,560.4 722.0,562.6 727.6,559.2 735.4,557.4 743.3,559.2 750.0,560.4 755.6,558.8 762.4,559.7 766.9,562.6 772.5,564.9 778.0,562.0 782.6,561.0 787.0,567.0 791.6,564.9 795.0,573.8 799.5,580.6 802.8,590.7 807.3,600.8 811.8,603.0 817.4,596.3 820.8,596.3 824.5,600.0 831.2,602.6 835.7,602.4 840.2,599.7 842.5,602.0 847.0,615.4 850.3,615.4 856.0,608.0 861.6,609.8 868.3,606.9 873.9,605.3 879.6,595.6 884.0,602.0 887.4,604.6 894.2,605.3 900.9,609.0 907.6,611.6 911.0,603.7 915.5,616.5 923.4,613.6 931.2,605.3 940.2,605.8 943.1,602.0 945.8,620.0 950.3,640.6 960.4,641.3 967.2,646.4 971.7,644.2 974.5,645.8 979.0,657.0 985.7,655.9 990.2,655.2 994.7,658.6 999.2,660.8 1007.0,655.9 1013.8,657.0 1019.0,655.4 1024.0,667.0 1029.6,668.9 1035.2,671.6 1040.8,671.6 1047.5,668.9 1050.9,670.5 1055.4,676.0 1059.9,680.6 1064.4,676.5 1068.9,676.0 1072.2,671.6 1075.6,676.5 1080.0,679.5 1084.6,679.5 1091.3,671.0 1095.8,676.5 1099.2,677.9 1103.7,668.2 1107.5,666.7" fill="none" stroke="#000" stroke-width="2.3" stroke-linejoin="round" stroke-linecap="round" shape-rendering="crispEdges"/>
<g filter="url(#sh2)"><rect x="989.1" y="365.1" width="289.8" height="7.8" fill="none" stroke="#c00000" stroke-width="2.3"/></g>
<g filter="url(#sh)"><line x1="1060.1" y1="439.2" x2="1143.5" y2="378.2" stroke="#c00000" stroke-width="3"/><path d="M1152.9 369.9 L1139.8 373.4 L1146.9 383.5 Z" fill="#c00000" stroke="#c00000" stroke-width="0.6" stroke-linejoin="round"/></g>
<g filter="url(#sh)"><ellipse cx="1103.2" cy="498.2" rx="58.8" ry="50.3" fill="none" stroke="#1b7a1b" stroke-width="2.6"/></g>
<rect x="11.5" y="27.5" width="13" height="10.5" rx="1.5" fill="#fff" stroke="#2a6ab8" stroke-width="1.2"/>
<rect x="11.5" y="27.5" width="13" height="2" fill="#3c7cc8"/>
<path d="M14 30.5v6M12.8 31.8l1.2-1.3 1.2 1.3M12.8 35.2l1.2 1.3 1.2-1.3" stroke="#7a9cc8" stroke-width="0.9" fill="none"/>
<path d="M20.5 30.7h3.4v3.6h3.6v3.4h-3.6v3.6h-3.4v-3.6h-3.6v-3.4h3.6z" fill="#18d018" stroke="#0a8c0a" stroke-width="1" stroke-linejoin="round"/>
<path d="M21.6 31.9v8.2" stroke="#8cf08c" stroke-width="1.2"/>
<rect x="49.7" y="32.5" width="13" height="10.3" rx="1.5" fill="#fff" stroke="#2a6ab8" stroke-width="1.2"/>
<path d="M52 39.5h8.5M53.2 38.3l-1.2 1.2 1.2 1.2M59.3 38.3l1.2 1.2-1.2 1.2" stroke="#7a9cc8" stroke-width="0.9" fill="none"/>
<rect x="46.5" y="27.5" width="13.3" height="10.3" rx="1.5" fill="#fff" stroke="#2a6ab8" stroke-width="1.2"/>
<rect x="46.5" y="27.5" width="13.3" height="1.8" fill="#3c7cc8"/>
<path d="M49.3 30.5v6M48.1 31.8l1.2-1.3 1.2 1.3M49.3 34.5h8.5M56.6 33.3l1.2 1.2-1.2 1.2" stroke="#7a9cc8" stroke-width="0.9" fill="none"/>
<rect x="88.6" y="27.8" width="15" height="14.6" rx="1.8" fill="#fff" stroke="#5a9ae8" stroke-width="1.4"/>
<path d="M99 31h3M99 34h3M90.5 37.5h4M90.5 40h4" stroke="#d0d8e8" stroke-width="0.8"/>
<path d="M93.4 29.6l3.4 3.6h-2v2.6h-2.8v-2.6h-2z" fill="#18a818" stroke="#0a7a0a" stroke-width="0.6"/>
<path d="M97.6 40.8l-3.4-3.6h2v-2.4h2.8v2.4h2z" fill="#f06030" stroke="#c03a10" stroke-width="0.6"/>
<circle cx="124.5" cy="35.5" r="4.8" fill="none" stroke="#5a5a5a" stroke-width="1.4"/>
<path d="M124.5 28v5.5M124.5 37.5v5.5M117 35.5h5.5M126.5 35.5h5.5" stroke="#5a5a5a" stroke-width="1.3"/>
<path d="M143.3 29.5q0-1.5 1.5-1.5h3l1.2 1.5h4q1.2 0 1.2 1.2v5.6q0 1-1 1h-8.9q-1 0-1-1z" fill="#f4d060" stroke="#c89a18" stroke-width="0.9"/>
<path d="M144 31h9.5v1.5h-9.5z" fill="#fbe9a0"/>
<path d="M147.5 38.6v1M147.5 40.6v1M147.5 42.4v0.8" stroke="#444" stroke-width="1"/>
<path d="M155.8 31.6l1.7 3.6 3.9 0.5-2.9 2.7 0.8 3.9-3.5-2-3.5 2 0.8-3.9-2.9-2.7 3.9-0.5z" fill="#f8d848" stroke="#b88a10" stroke-width="0.9" stroke-linejoin="round"/>
<rect x="172.6" y="28.5" width="15" height="13" rx="1.8" fill="#fff" stroke="#2a62d0" stroke-width="1.5"/>
<rect x="172.6" y="28.5" width="3.2" height="13" fill="#2a62d0"/>
<rect x="173.6" y="36" width="1.2" height="4" fill="#223"/>
<path d="M178 31.2h9M178 33.6h9M178 36h9M178 38.4h9" stroke="#b8c8f0" stroke-width="0.8"/>
<rect x="176.4" y="30.6" width="1.3" height="1.3" fill="#e02020"/><rect x="176.4" y="33" width="1.3" height="1.3" fill="#222"/><rect x="176.4" y="35.4" width="1.3" height="1.3" fill="#222"/><rect x="176.4" y="37.8" width="1.3" height="1.3" fill="#e02020"/>
<rect x="200.4" y="27.6" width="12" height="12.4" rx="1" fill="#fbfaf4" stroke="#b4ac98" stroke-width="1"/>
<path d="M203 30v4M203 31h-1M203 33h1M210 29v5M210 30h-1M210 33h1" stroke="#666" stroke-width="0.9"/>
<path d="M212 39.8l5 4.2" stroke="#c89a10" stroke-width="2.4" stroke-linecap="round"/>
<circle cx="208.4" cy="36" r="4.9" fill="#cfe0f4" fill-opacity="0.85" stroke="#5a94dc" stroke-width="1.3"/>
<rect x="206.6" y="33.6" width="3" height="4.4" fill="#98a8bc"/>
<path d="M235.5 27.8h7.5l3.5 3.5v9.2h-11z" fill="#fff" stroke="#8a8a8a" stroke-width="1"/>
<path d="M243 27.8v3.5h3.5" fill="#e8e8e8" stroke="#8a8a8a" stroke-width="0.8"/>
<rect x="237.3" y="29.6" width="3" height="1.6" fill="#888"/><path d="M237.3 33.5h6M237.3 35.5h5M237.3 37.5h4" stroke="#9a9a9a" stroke-width="0.9"/>
<path d="M243.3 33.5h3.4v3.7h3.7v3.4h-3.7v3.7h-3.4v-3.7h-3.7v-3.4h3.7z" fill="#18d018" stroke="#0a8c0a" stroke-width="1" stroke-linejoin="round"/>
<path d="M244.4 34.7v8.4" stroke="#8cf08c" stroke-width="1.2"/>
<path d="M343.8 28.2l7.4 6.8-6.6 8-9.6-6.4z" fill="#b87c0c" stroke="#8a5a04" stroke-width="0.8" stroke-linejoin="round"/>
<path d="M344.2 28.6l6.6 6.2-5.6 6.6-8.4-5.6z" fill="#eeb828"/>
<path d="M344 30.2l4.6 4.6-4 4.6-5.6-3.8z" fill="#f8d458"/>
<path d="M335.6 36.8l9 6 0.6-0.8" fill="none" stroke="#f8e0a0" stroke-width="0.9"/>
<path d="M363.5 34.5h14.5l-6 8h-3z" fill="#f8d840" stroke="#c09a10" stroke-width="0.8"/>
<ellipse cx="370" cy="32.2" rx="8" ry="2.6" fill="#4aa0e0" stroke="#2a78b8" stroke-width="0.8"/>
<path d="M365.5 32q0.5-5 4.5-5t4.5 5z" fill="#58b0ec" stroke="#2a78b8" stroke-width="0.8"/>
<circle cx="374.5" cy="38.8" r="4.1" fill="#e02818" stroke="#a81408" stroke-width="0.7"/><rect x="372.8" y="37.1" width="3.4" height="3.4" fill="#fff"/>
<path d="M484.6 29.6v13M482 40.5h14" stroke="#4a4a4a" stroke-width="1.2" fill="none"/>
<path d="M484.6 28.2l1.9 2.6h-3.8zM497 40.5l-2.6 1.9v-3.8z" fill="#4a4a4a"/>
<path d="M490.6 31v7.4M490.6 31.4h2.6M488 37.8h2.6" stroke="#0a9a0a" stroke-width="1.4" fill="none"/>
<path d="M512.6 29.6v13M510 40.5h14" stroke="#4a4a4a" stroke-width="1.2" fill="none"/>
<path d="M512.6 28.2l1.9 2.6h-3.8zM525 40.5l-2.6 1.9v-3.8z" fill="#4a4a4a"/>
<path d="M518.6 27.2v11.6" stroke="#0a9a0a" stroke-width="1.3"/><rect x="516.5" y="29.6" width="4.3" height="7.2" fill="#30e030" stroke="#0a9a0a" stroke-width="1"/>
<path d="M540.7 29.6v13M538.1 40.5h14" stroke="#4a4a4a" stroke-width="1.2" fill="none"/>
<path d="M540.7 28.2l1.9 2.6h-3.8zM553.1 40.5l-2.6 1.9v-3.8z" fill="#4a4a4a"/>
<path d="M539.3 37.6q3.5-2 5.6-4.6t6 3.6" stroke="#1a9a1a" stroke-width="1.3" fill="none"/>
<path d="M580.3 37.6l5 4.6" stroke="#d8b020" stroke-width="2.6" stroke-linecap="round"/>
<path d="M580.6 37.9l4.6 4.2" stroke="#f4e080" stroke-width="0.9" stroke-linecap="round"/>
<circle cx="576" cy="33.1" r="5.4" fill="#cfe6f8" stroke="#3a84d8" stroke-width="1.3"/>
<path d="M572.8 33.1h6.4" stroke="#2a6cc4" stroke-width="1.8"/>
<path d="M576 29.9v6.4" stroke="#2a6cc4" stroke-width="1.8"/>
<path d="M608.3 37.6l5 4.6" stroke="#d8b020" stroke-width="2.6" stroke-linecap="round"/>
<path d="M608.6 37.9l4.6 4.2" stroke="#f4e080" stroke-width="0.9" stroke-linecap="round"/>
<circle cx="604" cy="33.1" r="5.4" fill="#cfe6f8" stroke="#3a84d8" stroke-width="1.3"/>
<path d="M600.8 33.1h6.4" stroke="#2a6cc4" stroke-width="1.8"/>
<rect x="626" y="27" width="8" height="8" rx="0.8" fill="#48a020"/>
<rect x="627.5" y="30.2" width="5" height="3.4" fill="none" stroke="#fff" stroke-width="1"/>
<rect x="627" y="28" width="1" height="1" fill="#fff" fill-opacity="0.8"/>
<rect x="634.2" y="27" width="8" height="8" rx="0.8" fill="#2050d0"/>
<rect x="635.7" y="30.2" width="5" height="3.4" fill="none" stroke="#fff" stroke-width="1"/>
<rect x="635.2" y="28" width="1" height="1" fill="#fff" fill-opacity="0.8"/>
<rect x="626" y="35.2" width="8" height="8" rx="0.8" fill="#2050d0"/>
<rect x="627.5" y="38.4" width="5" height="3.4" fill="none" stroke="#fff" stroke-width="1"/>
<rect x="627" y="36.2" width="1" height="1" fill="#fff" fill-opacity="0.8"/>
<rect x="634.2" y="35.2" width="8" height="8" rx="0.8" fill="#48a020"/>
<rect x="635.7" y="38.4" width="5" height="3.4" fill="none" stroke="#fff" stroke-width="1"/>
<rect x="635.2" y="36.2" width="1" height="1" fill="#fff" fill-opacity="0.8"/>
<path d="M664.8 29.6v13M662.2 40.5h14" stroke="#4a4a4a" stroke-width="1.2" fill="none"/>
<path d="M664.8 28.2l1.9 2.6h-3.8zM677.2 40.5l-2.6 1.9v-3.8z" fill="#4a4a4a"/>
<path d="M669 31.2l4.2 3.1-4.2 3.1z" fill="#38d038" stroke="#0a9a0a" stroke-width="0.9"/>
<path d="M692.8 29.6v13M690.2 40.5h14" stroke="#4a4a4a" stroke-width="1.2" fill="none"/>
<path d="M692.8 28.2l1.9 2.6h-3.8zM705.2 40.5l-2.6 1.9v-3.8z" fill="#4a4a4a"/>
<path d="M698.6 28.6v10.4" stroke="#1a5aa8" stroke-width="1.3"/><path d="M699.6 34.4h4.6M699.6 34.4l2.4-2.2M699.6 34.4l2.4 2.2" stroke="#e04010" stroke-width="1.1" fill="none"/>
<path d="M723.5 27.6h7.5l3.3 3.3v9.2h-10.8z" fill="#fff" stroke="#8a8a8a" stroke-width="1"/>
<path d="M731 27.6v3.3h3.3" fill="#e8e8e8" stroke="#8a8a8a" stroke-width="0.8"/>
<path d="M728.5 30.5q-2.2-0.4-2.2 1.8v5.6M725 34h3.2" stroke="#555" stroke-width="0.9" fill="none"/>
<path d="M731.3 33.2h3.4v3.6h3.6v3.4h-3.6v3.6h-3.4v-3.6h-3.6v-3.4h3.6z" fill="#18d018" stroke="#0a8c0a" stroke-width="1" stroke-linejoin="round"/>
<path d="M732.4 34.4v8.2" stroke="#8cf08c" stroke-width="1.2"/>
<circle cx="764.8" cy="34.8" r="6.5" fill="#f4f8ff" stroke="#1c5ad4" stroke-width="2.9"/>
<circle cx="764.8" cy="34.8" r="7.9" fill="none" stroke="#0a3a9a" stroke-width="0.5"/>
<path d="M764.8 30.6v4.4h3.4" stroke="#555" stroke-width="1.1" fill="none"/>
<path d="M764.8 29.2v0.8M764.8 39.6v0.8M759.2 34.8h0.8M769.6 34.8h0.8" stroke="#8aa" stroke-width="0.8"/>
<rect x="792.5" y="28.4" width="15" height="13.2" fill="#fff" stroke="#2a62c0" stroke-width="1.1"/>
<rect x="792.5" y="28.4" width="15" height="2.2" fill="#3a74d0"/><path d="M792.5 36h15" stroke="#2a62c0" stroke-width="1"/>
<path d="M794.5 34l2-0.6 2-1 2 0.6 2-1 3-0.3" stroke="#a02020" stroke-width="1.1" fill="none"/>
<path d="M794.5 40l2-1 2 0.6 2-1.8 2 1.2 2.6-1" stroke="#1a8a1a" stroke-width="1.1" fill="none"/>
<circle cx="1240.4" cy="31.6" r="3.4" fill="#fff" stroke="#2a58c8" stroke-width="1.5"/><path d="M1238 34.2l-4.4 4.6" stroke="#2a58c8" stroke-width="2.2" stroke-linecap="round"/>
<path d="M1257 27h14.4q1 0 1 1v10q0 1-1 1h-10.2l-2.6 3.4v-3.4h-1.6q-1 0-1-1v-10q0-1 1-1z" fill="#6a80b4"/>
<text x="1260.5" y="37.4" font-size="10.5" font-weight="bold" fill="#fff">4</text>
<path d="M16 54.8v11.6l2.9-2.6 2.3 5 2-0.9-2.3-4.9h3.9z" fill="#484848"/>
<path d="M48.5 55.2v5.6M48.5 64v5.6M41 62.4h5.8M50.2 62.4h5.8" stroke="#555" stroke-width="1.1"/>
<path d="M82.5 56v12.8" stroke="#505050" stroke-width="1.3"/>
<path d="M105 62.4h12" stroke="#505050" stroke-width="1.3"/>
<path d="M133 68.7l12.2-11.7" stroke="#505050" stroke-width="1.3"/>
<path d="M158.8 64.5l9.6-7.6M162 68.6l10-8M161.5 59.5l2 8M165 57.5l2 9M169 54.6l1.6 8.4" stroke="#4a4a4a" stroke-width="1.1" fill="none"/>
<text x="170" y="70.6" font-size="6" font-weight="bold" fill="#333">E</text>
<path d="M187.8 55.4h13.2" stroke="#444" stroke-width="1" stroke-dasharray="1 1"/>
<path d="M187.8 58.4h13.2" stroke="#444" stroke-width="1" stroke-dasharray="1 1"/>
<path d="M187.8 62.4h13.2" stroke="#444" stroke-width="1" stroke-dasharray="1 1"/>
<path d="M187.8 66.2h8.7" stroke="#444" stroke-width="1" stroke-dasharray="1 1"/>
<text x="197.6" y="70.6" font-size="6" font-weight="bold" fill="#333">F</text>
<text x="218.2" y="66.5" font-size="12" fill="#4a4a4a" textLength="8.2" lengthAdjust="spacingAndGlyphs">A</text>
<rect x="245.2" y="55.9" width="11.4" height="12.6" fill="none" stroke="#444" stroke-width="1" stroke-dasharray="1 1"/>
<path d="M247.6 58.8h6.8M251 58.8v8" stroke="#4a4a4a" stroke-width="1.6"/>
<path d="M275.2 56l3 3.4h-6zM282.6 67.8l-3-3.4h6z" fill="#484848"/><path d="M274 62.4l2.4 2.6 5-5.6" stroke="#484848" stroke-width="1.3" fill="none"/>
<path d="M563 77.6v13q0 3 3 3h86q3 0 3-3v-13" fill="#5f6977" fill-opacity="0.9" stroke="#949daa" stroke-width="1"/>
<path d="M587 77.6v16M612 77.6v16" stroke="#949daa" stroke-width="1"/>
<rect x="569.5" y="86.8" width="10.5" height="3" fill="#ececec"/>
<rect x="595.5" y="82.8" width="8.5" height="6.2" fill="none" stroke="#ececec" stroke-width="2"/>
<path d="M629.8 82l8 8M637.8 82l-8 8" stroke="#f0f0f0" stroke-width="2.6"/>
<path d="M1172 81.6v13q0 3 3 3h86q3 0 3-3v-13" fill="#5f6977" fill-opacity="0.9" stroke="#949daa" stroke-width="1"/>
<path d="M1196 81.6v16M1221 81.6v16" stroke="#949daa" stroke-width="1"/>
<rect x="1178.5" y="90.8" width="10.5" height="3" fill="#ececec"/>
<rect x="1204.5" y="86.8" width="8.5" height="6.2" fill="none" stroke="#ececec" stroke-width="2"/>
<path d="M1238.8 86l8 8M1246.8 86l-8 8" stroke="#f0f0f0" stroke-width="2.6"/>
<rect x="10.3" y="85.4" width="9.6" height="7.4" fill="#fff" stroke="#3a66e0" stroke-width="1" stroke-dasharray="1.2 0.8"/>
<path d="M11.9 89.4l1.5-1.5 1.5 1.5 1.5-1.5 1.5 1.5" stroke="#3a66e0" stroke-width="0.9" fill="none"/>
<rect x="13.9" y="91" width="9.8" height="7.6" fill="#fff" stroke="#3a66e0" stroke-width="1" stroke-dasharray="1.2 0.8"/>
<path d="M15.9 93.8l1.4 2.4 1.4-2.4 1.4 2.4 1.4-2.4" stroke="#3a66e0" stroke-width="0.9" fill="none"/>
<rect x="669.8" y="89.2" width="9.6" height="7.4" fill="#fff" stroke="#3a66e0" stroke-width="1" stroke-dasharray="1.2 0.8"/>
<path d="M671.4 93.2l1.5-1.5 1.5 1.5 1.5-1.5 1.5 1.5" stroke="#3a66e0" stroke-width="0.9" fill="none"/>
<rect x="673.4" y="94.8" width="9.8" height="7.6" fill="#fff" stroke="#3a66e0" stroke-width="1" stroke-dasharray="1.2 0.8"/>
<path d="M675.4 97.6l1.4 2.4 1.4-2.4 1.4 2.4 1.4-2.4" stroke="#3a66e0" stroke-width="0.9" fill="none"/>
<text x="6.5" y="14" fill="#a6a6a6" font-size="11.6" textLength="29.2" lengthAdjust="spacingAndGlyphs" >Файл</text>
<text x="51.5" y="14" fill="#a6a6a6" font-size="11.6" textLength="18.2" lengthAdjust="spacingAndGlyphs" >Вид</text>
<text x="86.3" y="14" fill="#a6a6a6" font-size="11.6" textLength="40.8" lengthAdjust="spacingAndGlyphs" >Вставка</text>
<text x="144.8" y="14" fill="#a6a6a6" font-size="11.6" textLength="42.2" lengthAdjust="spacingAndGlyphs" >Графики</text>
<text x="204.4" y="14" fill="#a6a6a6" font-size="11.6" textLength="36.6" lengthAdjust="spacingAndGlyphs" >Сервис</text>
<text x="256.5" y="14" fill="#a6a6a6" font-size="11.6" textLength="25.5" lengthAdjust="spacingAndGlyphs" >Окно</text>
<text x="299" y="14" fill="#a6a6a6" font-size="11.6" textLength="42.1" lengthAdjust="spacingAndGlyphs" >Справка</text>
<text x="255.6" y="38.6" fill="#0c0c1c" font-size="10.8" textLength="68.4" lengthAdjust="spacingAndGlyphs" >Новый Ордер</text>
<text x="385" y="38.6" fill="#0c0c1c" font-size="10.8" textLength="75.3" lengthAdjust="spacingAndGlyphs" >Авто-торговля</text>
<text x="315.6" y="65.8" fill="#383838" font-size="9.3" textLength="12.8" lengthAdjust="spacingAndGlyphs" >M1</text>
<text x="343.4" y="65.8" fill="#383838" font-size="9.3" textLength="13.1" lengthAdjust="spacingAndGlyphs" >M5</text>
<text x="369.4" y="65.8" fill="#383838" font-size="9.3" textLength="17.9" lengthAdjust="spacingAndGlyphs" >M15</text>
<text x="397.6" y="65.8" fill="#383838" font-size="9.3" textLength="18" lengthAdjust="spacingAndGlyphs" >M30</text>
<text x="428.7" y="65.8" fill="#383838" font-size="9.3" textLength="11.3" lengthAdjust="spacingAndGlyphs" >H1</text>
<text x="455.6" y="65.8" fill="#383838" font-size="9.3" textLength="12.4" lengthAdjust="spacingAndGlyphs" >H4</text>
<text x="484.4" y="65.8" fill="#383838" font-size="9.3" textLength="11.9" lengthAdjust="spacingAndGlyphs" >D1</text>
<text x="512.2" y="65.8" fill="#383838" font-size="9.3" textLength="14.1" lengthAdjust="spacingAndGlyphs" >W1</text>
<text x="538.8" y="65.8" fill="#383838" font-size="9.3" textLength="14.6" lengthAdjust="spacingAndGlyphs" >MN</text>
<text x="31.2" y="96" fill="#a79f93" font-size="10.6" textLength="62.9" lengthAdjust="spacingAndGlyphs" >NZDUSD,M15</text>
<text x="690" y="99.5" fill="#a79f93" font-size="10.6" textLength="56" lengthAdjust="spacingAndGlyphs" >NZDUSD,H4</text>
<text x="14.3" y="747.8" fill="#8a8e9c" font-size="10.4" textLength="58.2" lengthAdjust="spacingAndGlyphs" >EURUSD,M5</text>
<text x="95" y="747.8" fill="#8a8e9c" font-size="10.4" textLength="64.5" lengthAdjust="spacingAndGlyphs" >EURUSD,M15</text>
<text x="181" y="747.8" fill="#8a8e9c" font-size="10.4" textLength="63.5" lengthAdjust="spacingAndGlyphs" >GBPUSD,M15</text>
<text x="267" y="747.8" fill="#8a8e9c" font-size="10.4" textLength="57.5" lengthAdjust="spacingAndGlyphs" >GBPUSD,H1</text>
<text x="346.8" y="747.8" fill="#8a8e9c" font-size="10.4" textLength="64.5" lengthAdjust="spacingAndGlyphs" >AUDUSD,M15</text>
<text x="434.5" y="747.8" fill="#8a8e9c" font-size="10.4" textLength="58" lengthAdjust="spacingAndGlyphs" >AUDUSD,H1</text>
<text x="515" y="747.8" fill="#8a8e9c" font-size="10.4" textLength="64.3" lengthAdjust="spacingAndGlyphs" >NZDUSD,M15</text>
<text x="683.3" y="747.8" fill="#8a8e9c" font-size="10.4" textLength="64.2" lengthAdjust="spacingAndGlyphs" >USDCHF,M15</text>
<text x="770.5" y="747.8" fill="#8a8e9c" font-size="10.4" textLength="57.5" lengthAdjust="spacingAndGlyphs" >USDCHF,H4</text>
<text x="850.8" y="747.8" fill="#8a8e9c" font-size="10.4" textLength="64.6" lengthAdjust="spacingAndGlyphs" >USDCAD,M15</text>
<text x="938" y="747.8" fill="#8a8e9c" font-size="10.4" textLength="58.5" lengthAdjust="spacingAndGlyphs" >USDCAD,H4</text>
<text x="1017.9" y="747.8" fill="#8a8e9c" font-size="10.4" textLength="62.3" lengthAdjust="spacingAndGlyphs" >EURGBP,M15</text>
<text x="1103.4" y="747.8" fill="#8a8e9c" font-size="10.4" textLength="56.4" lengthAdjust="spacingAndGlyphs" >EURGBP,H4</text>
<text x="1182" y="747.8" fill="#8a8e9c" font-size="10.4" textLength="61.5" lengthAdjust="spacingAndGlyphs" >USDJPY,M15</text>
<text x="602.5" y="747.8" fill="#000" font-size="10.4" textLength="57.5" lengthAdjust="spacingAndGlyphs" >NZDUSD,H4</text>
</svg>
</body></html>
